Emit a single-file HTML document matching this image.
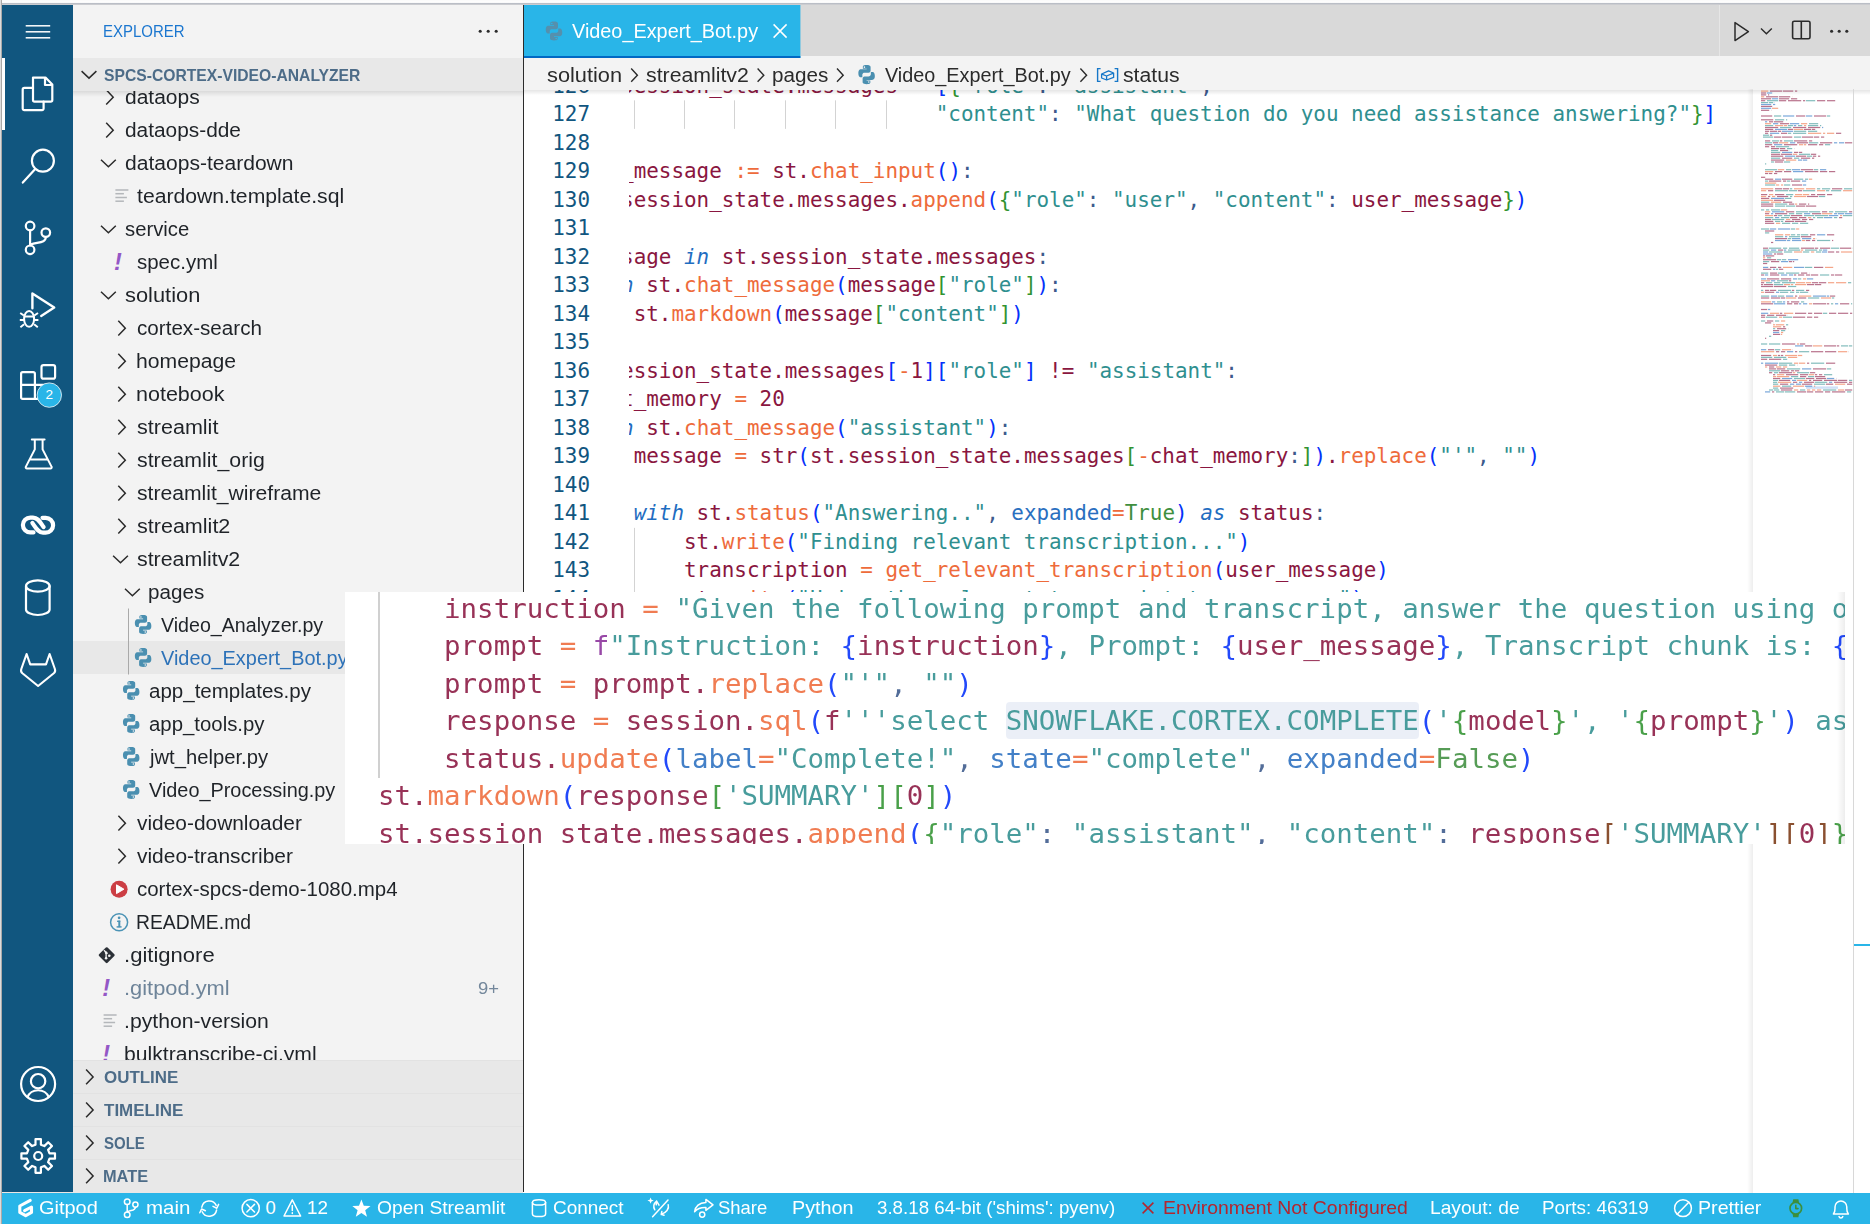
<!DOCTYPE html>
<html lang="en"><head><meta charset="utf-8"><title>Video_Expert_Bot.py - spcs-cortex-video-analyzer</title>
<style>
*{box-sizing:border-box;margin:0;padding:0}
html,body{width:1870px;height:1224px;overflow:hidden;background:#fff}
body{position:relative;font-family:"Liberation Sans", "DejaVu Sans", sans-serif;color:#1f2328}
.abs{position:absolute}
.t{position:absolute;white-space:pre;line-height:1;transform-origin:0 0}
#top{left:0;top:0;width:1870px;height:5px;background:linear-gradient(#fbfbfb 0,#fbfbfb 1px,#fdfdfd 1px,#fdfdfd 2px,#fff 2px,#f4f4f5 3px,#babec6 3px,#babec6 4px,#cbccd0 4px,#cbccd0 5px)}
#lb{left:0;top:0;width:2px;height:1224px;background:linear-gradient(90deg,#dcdcdc 0,#dcdcdc 1px,#aeaaa8 1px,#a8a8a8 2px)}
#act{left:2px;top:5px;width:71px;height:1187px;background:#11567f}
#side{left:73px;top:5px;width:450px;height:1188px;background:#f3f3f3}
#sb{left:523px;top:5px;width:1px;height:1187px;background:#2b2b2b}
#ed{left:524px;top:5px;width:1346px;height:1188px;background:#fff}
#status{left:2px;top:1192.8px;width:1868px;height:32px;background:#29b5e8}
svg{position:absolute;overflow:visible}
.code{position:absolute;font-family:"DejaVu Sans Mono", "Liberation Mono", monospace;font-size:20.92px;line-height:28.5px;height:28.5px;white-space:pre;color:#8a1640}
.ln{position:absolute;font-family:"DejaVu Sans Mono", "Liberation Mono", monospace;font-size:20.92px;line-height:28.5px;height:28.5px;color:#11567f;text-align:right;width:60px;white-space:pre}
.v{color:#8a1640}.fp{color:#8a2f9a}.f{color:#ee6b3b}.s{color:#2f8f8f}.k{color:#1f6dc1;font-style:italic}.o{color:#ee6b3b}
.p{color:#3c5a8c}.b1{color:#0431fa}.b2{color:#319331}.b3{color:#7b3814}.a{color:#2a6fc0}.c{color:#3f8f3f}.n{color:#8a1640}
.hl{background:#e9edf7;border-radius:4px;padding:2.6px 0}
</style></head>
<body>
<div class="abs" id="act"></div>
<div class="abs" id="side"></div>
<div class="abs" id="ed"></div>
<div class="abs" id="sb"></div>
<svg style="left:0;top:0" width="80" height="1224" viewBox="0 0 80 1224"><rect x="2" y="58" width="3" height="72" fill="#fff"/><path d="M25.7 25.8 H50.2" stroke="#fff" stroke-width="1.5"/><path d="M25.7 31.8 H50.2" stroke="#fff" stroke-width="1.5"/><path d="M25.7 37.8 H50.2" stroke="#fff" stroke-width="1.5"/><path d="M33 77.6 H45.5 L52.3 84.6 V100 a1.6 1.6 0 0 1 -1.6 1.6 H34.6 a1.6 1.6 0 0 1 -1.6 -1.6 Z M45 78 V85 H52" fill="none" stroke="#fff" stroke-width="2.2" stroke-linejoin="round" stroke-linecap="round"/><path d="M33 87.9 H24.3 a1.6 1.6 0 0 0 -1.6 1.6 V108.6 a1.6 1.6 0 0 0 1.6 1.6 H42 a1.6 1.6 0 0 0 1.6 -1.6 V101.6" fill="none" stroke="#fff" stroke-width="2.2" stroke-linejoin="round" stroke-linecap="round"/><circle cx="42.9" cy="160.7" r="11" fill="none" stroke="#fff" stroke-width="2.2" stroke-linejoin="round" stroke-linecap="round"/><path d="M35 169.3 L22.8 182.6" fill="none" stroke="#fff" stroke-width="2.2" stroke-linejoin="round" stroke-linecap="round"/><circle cx="30.1" cy="226" r="4.3" fill="none" stroke="#fff" stroke-width="2.2" stroke-linejoin="round" stroke-linecap="round"/><circle cx="30.1" cy="249.8" r="4.3" fill="none" stroke="#fff" stroke-width="2.2" stroke-linejoin="round" stroke-linecap="round"/><circle cx="45.8" cy="232.6" r="4.3" fill="none" stroke="#fff" stroke-width="2.2" stroke-linejoin="round" stroke-linecap="round"/><path d="M30.1 230.4 V245.4 M45.8 237 C45.8 243 38 242 30.6 244.6" fill="none" stroke="#fff" stroke-width="2.2" stroke-linejoin="round" stroke-linecap="round"/><path d="M32.4 308.2 V293.4 L54.2 307.6 L41.2 315.9" fill="none" stroke="#fff" stroke-width="2.4" stroke-linejoin="round" stroke-linecap="round"/><ellipse cx="29.1" cy="318.9" rx="5" ry="7.9" fill="none" stroke="#fff" stroke-width="2"/><path d="M24.3 316.5 H33.9 M20.2 312.9 L23.9 315.6 M38 312.9 L34.3 315.6 M19.8 320 H24 M34.2 320 H38.4 M20.4 327.2 L24.1 324.2 M37.8 327.2 L34.1 324.2" fill="none" stroke="#fff" stroke-width="1.9" stroke-linecap="butt"/><path d="M21.1 384.8 H34.9 V398.9 H22.7 a1.6 1.6 0 0 1 -1.6 -1.6 Z M21.1 384.8 V373.7 a1.6 1.6 0 0 1 1.6 -1.6 H33.3 a1.6 1.6 0 0 1 1.6 1.6 V384.8 M34.9 384.8 H47 V397.3 a1.6 1.6 0 0 1 -1.6 1.6 H34.9" fill="none" stroke="#fff" stroke-width="2.2" stroke-linejoin="round" stroke-linecap="round"/><rect x="41.5" y="365.1" width="13.6" height="13.6" rx="2" fill="none" stroke="#fff" stroke-width="2.2" stroke-linejoin="round" stroke-linecap="round"/><circle cx="49.3" cy="395.1" r="12.2" fill="#29b5e8" stroke="#e6f1f6" stroke-opacity=".85" stroke-width="1"/><path d="M31.8 439.4 H44.6 M34.8 439.8 V449.4 L25.9 466.6 a1.3 1.3 0 0 0 1.2 2 H50.3 a1.3 1.3 0 0 0 1.2 -2 L42.6 449.4 V439.8 M30 459.4 H47.4" fill="none" stroke="#fff" stroke-width="2" stroke-linejoin="round" stroke-linecap="round"/><path d="M33.5 532.4 H30.3 a7.4 7.4 0 0 1 0 -14.8 H33 C38 517.6 40 522 43.6 527 M42.5 517.8 H45.7 a7.4 7.4 0 0 1 0 14.8 H43 C38 532.6 36 528 32.4 523" fill="none" stroke="#fff" stroke-width="4.2" stroke-linecap="round" stroke-linejoin="round"/><ellipse cx="37.8" cy="586" rx="11.8" ry="5.6" fill="none" stroke="#fff" stroke-width="2.2" stroke-linejoin="round" stroke-linecap="round"/><path d="M26 586 V609.4 a11.8 5.6 0 0 0 23.6 0 V586" fill="none" stroke="#fff" stroke-width="2.2" stroke-linejoin="round" stroke-linecap="round"/><path d="M26.6 654 L30.2 664.4 H46 L49.6 654 L54.9 669 Q55.8 671.6 53.8 673.3 L38.1 686 L22.4 673.3 Q20.4 671.6 21.3 669 Z" fill="none" stroke="#fff" stroke-width="2.1" stroke-linejoin="round" stroke-linecap="round"/><circle cx="38.1" cy="1084" r="17" fill="none" stroke="#fff" stroke-width="2.2" stroke-linejoin="round" stroke-linecap="round"/><circle cx="38.1" cy="1081.2" r="7.2" fill="none" stroke="#fff" stroke-width="2.2" stroke-linejoin="round" stroke-linecap="round"/><path d="M27.6 1097 a11 9.6 0 0 1 21 0" fill="none" stroke="#fff" stroke-width="2.2" stroke-linejoin="round" stroke-linecap="round"/><path d="M35.5 1144.7 L35.5 1139.2 L40.9 1139.2 L40.9 1144.7 L44.3 1146.1 L48.2 1142.2 L52.0 1146.0 L48.1 1149.9 L49.5 1153.3 L55.0 1153.3 L55.0 1158.7 L49.5 1158.7 L48.1 1162.1 L52.0 1166.0 L48.2 1169.8 L44.3 1165.9 L40.9 1167.3 L40.9 1172.8 L35.5 1172.8 L35.5 1167.3 L32.1 1165.9 L28.2 1169.8 L24.4 1166.0 L28.3 1162.1 L26.9 1158.7 L21.4 1158.7 L21.4 1153.3 L26.9 1153.3 L28.3 1149.9 L24.4 1146.0 L28.2 1142.2 L32.1 1146.1 Z" fill="none" stroke="#fff" stroke-width="2.2" stroke-linejoin="round" stroke-linecap="round"/><circle cx="38.2" cy="1156" r="4" fill="none" stroke="#fff" stroke-width="2.2" stroke-linejoin="round" stroke-linecap="round"/></svg>
<span class="t" style="left:45.42px;top:388.39px;font-size:13.6px;color:#fff;transform:scaleX(1.0000);">2</span>
<div class="abs" style="left:73px;top:5px;width:450px;height:1188px;overflow:hidden"><div class="abs" style="left:-73px;top:-5px;width:600px;height:1224px">
<svg style="left:0;top:0" width="600" height="1224" viewBox="0 0 600 1224"><rect x="73" y="641" width="450" height="33" fill="#e8e8e8"/><rect x="128" y="608.5" width="1" height="66" fill="#a9a9a9"/><path d="M106.2 89.8 l7 7.4 l-7 7.4" fill="none" stroke="#2b2b2b" stroke-width="1.5" stroke-linejoin="miter"/><path d="M106.2 122.8 l7 7.4 l-7 7.4" fill="none" stroke="#2b2b2b" stroke-width="1.5" stroke-linejoin="miter"/><path d="M101 159.7 l7.4 7 l7.4 -7" fill="none" stroke="#2b2b2b" stroke-width="1.5" stroke-linejoin="miter"/><rect x="115.4" y="189.25" width="13" height="1.5" fill="#b4b7ba"/><rect x="115.4" y="192.95" width="8.5" height="1.5" fill="#b4b7ba"/><rect x="115.4" y="196.75" width="11.5" height="1.5" fill="#b4b7ba"/><rect x="115.4" y="200.45" width="8.5" height="1.5" fill="#b4b7ba"/><path d="M101 225.7 l7.4 7 l7.4 -7" fill="none" stroke="#2b2b2b" stroke-width="1.5" stroke-linejoin="miter"/><path d="M101 291.7 l7.4 7 l7.4 -7" fill="none" stroke="#2b2b2b" stroke-width="1.5" stroke-linejoin="miter"/><path d="M118.3 320.8 l7 7.4 l-7 7.4" fill="none" stroke="#2b2b2b" stroke-width="1.5" stroke-linejoin="miter"/><path d="M118.3 353.8 l7 7.4 l-7 7.4" fill="none" stroke="#2b2b2b" stroke-width="1.5" stroke-linejoin="miter"/><path d="M118.3 386.8 l7 7.4 l-7 7.4" fill="none" stroke="#2b2b2b" stroke-width="1.5" stroke-linejoin="miter"/><path d="M118.3 419.8 l7 7.4 l-7 7.4" fill="none" stroke="#2b2b2b" stroke-width="1.5" stroke-linejoin="miter"/><path d="M118.3 452.8 l7 7.4 l-7 7.4" fill="none" stroke="#2b2b2b" stroke-width="1.5" stroke-linejoin="miter"/><path d="M118.3 485.8 l7 7.4 l-7 7.4" fill="none" stroke="#2b2b2b" stroke-width="1.5" stroke-linejoin="miter"/><path d="M118.3 518.8 l7 7.4 l-7 7.4" fill="none" stroke="#2b2b2b" stroke-width="1.5" stroke-linejoin="miter"/><path d="M113.1 555.7 l7.4 7 l7.4 -7" fill="none" stroke="#2b2b2b" stroke-width="1.5" stroke-linejoin="miter"/><path d="M125 588.7 l7.4 7 l7.4 -7" fill="none" stroke="#2b2b2b" stroke-width="1.5" stroke-linejoin="miter"/><g transform="translate(132.8 614.2) scale(1.2875)" fill="#4a8fb0"><path d="M7.9 0.6 C4.9 0.6 5.1 1.9 5.1 1.9 V3.4 H8 V3.9 H3.7 C3.7 3.9 1.6 3.7 1.6 6.9 C1.6 10.1 3.4 10 3.4 10 H4.7 V8.4 C4.7 8.4 4.6 6.6 6.5 6.6 H9.4 C9.4 6.6 11.1 6.6 11.1 4.9 V2.3 C11.1 2.3 11.4 0.6 7.9 0.6 Z"/><path d="M7.9 0.6 C4.9 0.6 5.1 1.9 5.1 1.9 V3.4 H8 V3.9 H3.7 C3.7 3.9 1.6 3.7 1.6 6.9 C1.6 10.1 3.4 10 3.4 10 H4.7 V8.4 C4.7 8.4 4.6 6.6 6.5 6.6 H9.4 C9.4 6.6 11.1 6.6 11.1 4.9 V2.3 C11.1 2.3 11.4 0.6 7.9 0.6 Z" transform="rotate(180 8 8)"/><circle cx="6.3" cy="2.2" r="0.62" fill="#f3f3f3"/><circle cx="9.7" cy="13.8" r="0.62" fill="#f3f3f3"/></g><g transform="translate(132.8 647.2) scale(1.2875)" fill="#4a8fb0"><path d="M7.9 0.6 C4.9 0.6 5.1 1.9 5.1 1.9 V3.4 H8 V3.9 H3.7 C3.7 3.9 1.6 3.7 1.6 6.9 C1.6 10.1 3.4 10 3.4 10 H4.7 V8.4 C4.7 8.4 4.6 6.6 6.5 6.6 H9.4 C9.4 6.6 11.1 6.6 11.1 4.9 V2.3 C11.1 2.3 11.4 0.6 7.9 0.6 Z"/><path d="M7.9 0.6 C4.9 0.6 5.1 1.9 5.1 1.9 V3.4 H8 V3.9 H3.7 C3.7 3.9 1.6 3.7 1.6 6.9 C1.6 10.1 3.4 10 3.4 10 H4.7 V8.4 C4.7 8.4 4.6 6.6 6.5 6.6 H9.4 C9.4 6.6 11.1 6.6 11.1 4.9 V2.3 C11.1 2.3 11.4 0.6 7.9 0.6 Z" transform="rotate(180 8 8)"/><circle cx="6.3" cy="2.2" r="0.62" fill="#f3f3f3"/><circle cx="9.7" cy="13.8" r="0.62" fill="#f3f3f3"/></g><g transform="translate(120.9 680.2) scale(1.2875)" fill="#4a8fb0"><path d="M7.9 0.6 C4.9 0.6 5.1 1.9 5.1 1.9 V3.4 H8 V3.9 H3.7 C3.7 3.9 1.6 3.7 1.6 6.9 C1.6 10.1 3.4 10 3.4 10 H4.7 V8.4 C4.7 8.4 4.6 6.6 6.5 6.6 H9.4 C9.4 6.6 11.1 6.6 11.1 4.9 V2.3 C11.1 2.3 11.4 0.6 7.9 0.6 Z"/><path d="M7.9 0.6 C4.9 0.6 5.1 1.9 5.1 1.9 V3.4 H8 V3.9 H3.7 C3.7 3.9 1.6 3.7 1.6 6.9 C1.6 10.1 3.4 10 3.4 10 H4.7 V8.4 C4.7 8.4 4.6 6.6 6.5 6.6 H9.4 C9.4 6.6 11.1 6.6 11.1 4.9 V2.3 C11.1 2.3 11.4 0.6 7.9 0.6 Z" transform="rotate(180 8 8)"/><circle cx="6.3" cy="2.2" r="0.62" fill="#f3f3f3"/><circle cx="9.7" cy="13.8" r="0.62" fill="#f3f3f3"/></g><g transform="translate(120.9 713.2) scale(1.2875)" fill="#4a8fb0"><path d="M7.9 0.6 C4.9 0.6 5.1 1.9 5.1 1.9 V3.4 H8 V3.9 H3.7 C3.7 3.9 1.6 3.7 1.6 6.9 C1.6 10.1 3.4 10 3.4 10 H4.7 V8.4 C4.7 8.4 4.6 6.6 6.5 6.6 H9.4 C9.4 6.6 11.1 6.6 11.1 4.9 V2.3 C11.1 2.3 11.4 0.6 7.9 0.6 Z"/><path d="M7.9 0.6 C4.9 0.6 5.1 1.9 5.1 1.9 V3.4 H8 V3.9 H3.7 C3.7 3.9 1.6 3.7 1.6 6.9 C1.6 10.1 3.4 10 3.4 10 H4.7 V8.4 C4.7 8.4 4.6 6.6 6.5 6.6 H9.4 C9.4 6.6 11.1 6.6 11.1 4.9 V2.3 C11.1 2.3 11.4 0.6 7.9 0.6 Z" transform="rotate(180 8 8)"/><circle cx="6.3" cy="2.2" r="0.62" fill="#f3f3f3"/><circle cx="9.7" cy="13.8" r="0.62" fill="#f3f3f3"/></g><g transform="translate(120.9 746.2) scale(1.2875)" fill="#4a8fb0"><path d="M7.9 0.6 C4.9 0.6 5.1 1.9 5.1 1.9 V3.4 H8 V3.9 H3.7 C3.7 3.9 1.6 3.7 1.6 6.9 C1.6 10.1 3.4 10 3.4 10 H4.7 V8.4 C4.7 8.4 4.6 6.6 6.5 6.6 H9.4 C9.4 6.6 11.1 6.6 11.1 4.9 V2.3 C11.1 2.3 11.4 0.6 7.9 0.6 Z"/><path d="M7.9 0.6 C4.9 0.6 5.1 1.9 5.1 1.9 V3.4 H8 V3.9 H3.7 C3.7 3.9 1.6 3.7 1.6 6.9 C1.6 10.1 3.4 10 3.4 10 H4.7 V8.4 C4.7 8.4 4.6 6.6 6.5 6.6 H9.4 C9.4 6.6 11.1 6.6 11.1 4.9 V2.3 C11.1 2.3 11.4 0.6 7.9 0.6 Z" transform="rotate(180 8 8)"/><circle cx="6.3" cy="2.2" r="0.62" fill="#f3f3f3"/><circle cx="9.7" cy="13.8" r="0.62" fill="#f3f3f3"/></g><g transform="translate(120.9 779.2) scale(1.2875)" fill="#4a8fb0"><path d="M7.9 0.6 C4.9 0.6 5.1 1.9 5.1 1.9 V3.4 H8 V3.9 H3.7 C3.7 3.9 1.6 3.7 1.6 6.9 C1.6 10.1 3.4 10 3.4 10 H4.7 V8.4 C4.7 8.4 4.6 6.6 6.5 6.6 H9.4 C9.4 6.6 11.1 6.6 11.1 4.9 V2.3 C11.1 2.3 11.4 0.6 7.9 0.6 Z"/><path d="M7.9 0.6 C4.9 0.6 5.1 1.9 5.1 1.9 V3.4 H8 V3.9 H3.7 C3.7 3.9 1.6 3.7 1.6 6.9 C1.6 10.1 3.4 10 3.4 10 H4.7 V8.4 C4.7 8.4 4.6 6.6 6.5 6.6 H9.4 C9.4 6.6 11.1 6.6 11.1 4.9 V2.3 C11.1 2.3 11.4 0.6 7.9 0.6 Z" transform="rotate(180 8 8)"/><circle cx="6.3" cy="2.2" r="0.62" fill="#f3f3f3"/><circle cx="9.7" cy="13.8" r="0.62" fill="#f3f3f3"/></g><path d="M118.4 815.8 l7 7.4 l-7 7.4" fill="none" stroke="#2b2b2b" stroke-width="1.5" stroke-linejoin="miter"/><path d="M118.4 848.8 l7 7.4 l-7 7.4" fill="none" stroke="#2b2b2b" stroke-width="1.5" stroke-linejoin="miter"/><circle cx="119.1" cy="889.2" r="8.5" fill="#cc3e44"/><path d="M116.5 884.8 l7.4 4.4 l-7.4 4.4 Z" fill="#fff" stroke="#fff" stroke-width="1" stroke-linejoin="round"/><circle cx="119.1" cy="922.2" r="8.5" fill="none" stroke="#4b93b5" stroke-width="1.5"/><rect x="118.3" y="920.6" width="2" height="6.6" fill="#4b93b5"/><rect x="117.1" y="920.6" width="3.2" height="1.4" fill="#4b93b5"/><rect x="116.6" y="926.2" width="5" height="1.4" fill="#4b93b5"/><circle cx="119.1" cy="917.8" r="1.35" fill="#4b93b5"/><rect x="100.7" y="949.2" width="12" height="12" rx="1.2" transform="rotate(45 106.7 955.2)" fill="#2b3036"/><path d="M103.9 950.2 l3.6 3.6 M106.1 952.6 v5.4" stroke="#f3f3f3" stroke-width="1.3" fill="none"/><circle cx="106.1" cy="952.8" r="1.3" fill="#f3f3f3"/><circle cx="106.1" cy="958.2" r="1.3" fill="#f3f3f3"/><circle cx="109.3" cy="955.8" r="1.3" fill="#f3f3f3"/><rect x="103.6" y="1014.25" width="13" height="1.5" fill="#b4b7ba"/><rect x="103.6" y="1017.95" width="8.5" height="1.5" fill="#b4b7ba"/><rect x="103.6" y="1021.75" width="11.5" height="1.5" fill="#b4b7ba"/><rect x="103.6" y="1025.45" width="8.5" height="1.5" fill="#b4b7ba"/></svg>
<span class="t" style="left:124.59px;top:86.67px;font-size:20px;color:#1f2328;transform:scaleX(1.0496);">dataops</span><span class="t" style="left:124.59px;top:119.67px;font-size:20px;color:#1f2328;transform:scaleX(1.0426);">dataops-dde</span><span class="t" style="left:124.59px;top:152.67px;font-size:20px;color:#1f2328;transform:scaleX(1.0525);">dataops-teardown</span><span class="t" style="left:137.19px;top:185.67px;font-size:20px;color:#1f2328;transform:scaleX(1.0587);">teardown.template.sql</span><span class="t" style="left:124.65px;top:218.67px;font-size:20px;color:#1f2328;transform:scaleX(1.0131);">service</span><span class="t" style="left:136.75px;top:251.67px;font-size:20px;color:#1f2328;transform:scaleX(1.0234);">spec.yml</span><span class="t" style="left:113.97px;top:250.51px;font-size:23.5px;color:#9457c6;font-weight:bold;font-style:italic;transform:scaleX(1.0000);">!</span><span class="t" style="left:124.62px;top:284.67px;font-size:20px;color:#1f2328;transform:scaleX(1.0920);">solution</span><span class="t" style="left:136.69px;top:317.67px;font-size:20px;color:#1f2328;transform:scaleX(1.0315);">cortex-search</span><span class="t" style="left:136.06px;top:350.67px;font-size:20px;color:#1f2328;transform:scaleX(1.0593);">homepage</span><span class="t" style="left:136.06px;top:383.67px;font-size:20px;color:#1f2328;transform:scaleX(1.0757);">notebook</span><span class="t" style="left:136.72px;top:416.67px;font-size:20px;color:#1f2328;transform:scaleX(1.0770);">streamlit</span><span class="t" style="left:136.72px;top:449.67px;font-size:20px;color:#1f2328;transform:scaleX(1.0649);">streamlit_orig</span><span class="t" style="left:136.72px;top:482.67px;font-size:20px;color:#1f2328;transform:scaleX(1.0563);">streamlit_wireframe</span><span class="t" style="left:136.72px;top:515.67px;font-size:20px;color:#1f2328;transform:scaleX(1.0767);">streamlit2</span><span class="t" style="left:136.72px;top:548.67px;font-size:20px;color:#1f2328;transform:scaleX(1.0674);">streamlitv2</span><span class="t" style="left:148.06px;top:581.67px;font-size:20px;color:#1f2328;transform:scaleX(1.0314);">pages</span><span class="t" style="left:161.02px;top:614.67px;font-size:20px;color:#1f2328;transform:scaleX(0.9810);">Video_Analyzer.py</span><span class="t" style="left:161.02px;top:647.67px;font-size:20px;color:#2d72b8;transform:scaleX(0.9949);">Video_Expert_Bot.py</span><span class="t" style="left:148.59px;top:680.67px;font-size:20px;color:#1f2328;transform:scaleX(1.0259);">app_templates.py</span><span class="t" style="left:148.59px;top:713.67px;font-size:20px;color:#1f2328;transform:scaleX(1.0185);">app_tools.py</span><span class="t" style="left:149.92px;top:746.67px;font-size:20px;color:#1f2328;transform:scaleX(1.0115);">jwt_helper.py</span><span class="t" style="left:149.12px;top:779.67px;font-size:20px;color:#1f2328;transform:scaleX(0.9933);">Video_Processing.py</span><span class="t" style="left:137.36px;top:812.67px;font-size:20px;color:#1f2328;transform:scaleX(1.0444);">video-downloader</span><span class="t" style="left:137.36px;top:845.67px;font-size:20px;color:#1f2328;transform:scaleX(1.0469);">video-transcriber</span><span class="t" style="left:136.79px;top:878.67px;font-size:20px;color:#1f2328;transform:scaleX(1.0236);">cortex-spcs-demo-1080.mp4</span><span class="t" style="left:136.03px;top:911.67px;font-size:20px;color:#1f2328;transform:scaleX(0.9672);">README.md</span><span class="t" style="left:123.65px;top:944.67px;font-size:20px;color:#1f2328;transform:scaleX(1.1028);">.gitignore</span><span class="t" style="left:123.67px;top:977.67px;font-size:20px;color:#6e8499;transform:scaleX(1.0920);">.gitpod.yml</span><span class="t" style="left:102.17px;top:976.51px;font-size:23.5px;color:#9457c6;font-weight:bold;font-style:italic;transform:scaleX(1.0000);">!</span><span class="t" style="left:123.70px;top:1010.67px;font-size:20px;color:#1f2328;transform:scaleX(1.0597);">.python-version</span><span class="t" style="left:124.32px;top:1043.67px;font-size:20px;color:#1f2328;transform:scaleX(1.0570);">bulktranscribe-ci.yml</span><span class="t" style="left:102.17px;top:1042.51px;font-size:23.5px;color:#9457c6;font-weight:bold;font-style:italic;transform:scaleX(1.0000);">!</span><span class="t" style="left:478.09px;top:979.61px;font-size:17px;color:#73879b;transform:scaleX(1.0829);">9+</span>
<div class="abs" style="left:73px;top:91px;width:450px;height:6px;background:linear-gradient(rgba(0,0,0,.10),rgba(0,0,0,0))"></div>
<svg style="left:0;top:0" width="600" height="1224" viewBox="0 0 600 1224"><rect x="73" y="58" width="450" height="33" fill="#e8e8e8"/><rect x="73" y="5" width="450" height="53" fill="#f3f3f3"/><path d="M81.6 71.1 l7.4 7 l7.4 -7" fill="none" stroke="#2b2b2b" stroke-width="1.5" stroke-linejoin="miter"/><circle cx="480.2" cy="31.2" r="1.55" fill="#2b2b2b"/><circle cx="488.2" cy="31.2" r="1.55" fill="#2b2b2b"/><circle cx="496.2" cy="31.2" r="1.55" fill="#2b2b2b"/><rect x="73" y="1060" width="450" height="133" fill="#e8e8e8"/><rect x="73" y="1060" width="450" height="1" fill="#e2e2e2"/><rect x="73" y="1093" width="450" height="1" fill="#e2e2e2"/><rect x="73" y="1126" width="450" height="1" fill="#e2e2e2"/><rect x="73" y="1159" width="450" height="1" fill="#e2e2e2"/><path d="M86.1 1069.5 l7 7.4 l-7 7.4" fill="none" stroke="#2b2b2b" stroke-width="1.5" stroke-linejoin="miter"/><path d="M86.1 1102.5 l7 7.4 l-7 7.4" fill="none" stroke="#2b2b2b" stroke-width="1.5" stroke-linejoin="miter"/><path d="M86.1 1135.5 l7 7.4 l-7 7.4" fill="none" stroke="#2b2b2b" stroke-width="1.5" stroke-linejoin="miter"/><path d="M86.1 1168.5 l7 7.4 l-7 7.4" fill="none" stroke="#2b2b2b" stroke-width="1.5" stroke-linejoin="miter"/></svg>
<span class="t" style="left:103.28px;top:23.23px;font-size:16.5px;color:#1a76cf;transform:scaleX(0.9084);">EXPLORER</span>
<span class="t" style="left:103.81px;top:66.83px;font-size:16.5px;color:#4d6c88;font-weight:bold;transform:scaleX(0.9502);">SPCS-CORTEX-VIDEO-ANALYZER</span>
<span class="t" style="left:103.81px;top:1069.03px;font-size:16.5px;color:#4d6c88;font-weight:bold;transform:scaleX(1.0262);">OUTLINE</span>
<span class="t" style="left:104.31px;top:1102.03px;font-size:16.5px;color:#4d6c88;font-weight:bold;transform:scaleX(1.0296);">TIMELINE</span>
<span class="t" style="left:103.85px;top:1135.03px;font-size:16.5px;color:#4d6c88;font-weight:bold;transform:scaleX(0.9088);">SOLE</span>
<span class="t" style="left:103.40px;top:1168.03px;font-size:16.5px;color:#4d6c88;font-weight:bold;transform:scaleX(0.9898);">MATE</span>
</div></div>
<svg style="left:0;top:0" width="1870" height="100" viewBox="0 0 1870 100"><rect x="524" y="5" width="1346" height="51" fill="#d9d9d9"/><rect x="524" y="56" width="1346" height="34" fill="#f3f3f3"/><rect x="524" y="5" width="276.4" height="53" fill="#29b5e8"/><rect x="524" y="56" width="276.4" height="2" fill="#0068c4"/><rect x="1719" y="5" width="1" height="51" fill="#e6e6e6"/><g transform="translate(543.7 20.7) scale(1.2875)" fill="#5590ad"><path d="M7.9 0.6 C4.9 0.6 5.1 1.9 5.1 1.9 V3.4 H8 V3.9 H3.7 C3.7 3.9 1.6 3.7 1.6 6.9 C1.6 10.1 3.4 10 3.4 10 H4.7 V8.4 C4.7 8.4 4.6 6.6 6.5 6.6 H9.4 C9.4 6.6 11.1 6.6 11.1 4.9 V2.3 C11.1 2.3 11.4 0.6 7.9 0.6 Z"/><path d="M7.9 0.6 C4.9 0.6 5.1 1.9 5.1 1.9 V3.4 H8 V3.9 H3.7 C3.7 3.9 1.6 3.7 1.6 6.9 C1.6 10.1 3.4 10 3.4 10 H4.7 V8.4 C4.7 8.4 4.6 6.6 6.5 6.6 H9.4 C9.4 6.6 11.1 6.6 11.1 4.9 V2.3 C11.1 2.3 11.4 0.6 7.9 0.6 Z" transform="rotate(180 8 8)"/><circle cx="6.3" cy="2.2" r="0.62" fill="#29b5e8"/><circle cx="9.7" cy="13.8" r="0.62" fill="#29b5e8"/></g><path d="M773.6 24.4 L786.6 37.6 M786.6 24.4 L773.6 37.6" stroke="#fff" stroke-width="1.5" fill="none"/><path d="M1735 22.6 V40.6 L1748.4 31.6 Z" fill="none" stroke="#2b2b2b" stroke-width="1.5" stroke-linejoin="round"/><path d="M1761 28.6 l5.4 5.2 l5.4 -5.2" fill="none" stroke="#2b2b2b" stroke-width="1.4"/><rect x="1792.6" y="21.2" width="17.4" height="17.6" rx="1.6" fill="none" stroke="#2b2b2b" stroke-width="1.6"/><path d="M1801.3 21.2 V38.8" stroke="#2b2b2b" stroke-width="1.6"/><circle cx="1831.6" cy="31.2" r="1.55" fill="#2b2b2b"/><circle cx="1839.2" cy="31.2" r="1.55" fill="#2b2b2b"/><circle cx="1846.8" cy="31.2" r="1.55" fill="#2b2b2b"/><path d="M631.2 68.6 l6.2 6.6 l-6.2 6.6" fill="none" stroke="#2b2b2b" stroke-width="1.4"/><path d="M757.6 68.6 l6.2 6.6 l-6.2 6.6" fill="none" stroke="#2b2b2b" stroke-width="1.4"/><path d="M837 68.6 l6.2 6.6 l-6.2 6.6" fill="none" stroke="#2b2b2b" stroke-width="1.4"/><path d="M1080.4 68.6 l6.2 6.6 l-6.2 6.6" fill="none" stroke="#2b2b2b" stroke-width="1.4"/><g transform="translate(856.3 64.3) scale(1.2875)" fill="#4a8fb0"><path d="M7.9 0.6 C4.9 0.6 5.1 1.9 5.1 1.9 V3.4 H8 V3.9 H3.7 C3.7 3.9 1.6 3.7 1.6 6.9 C1.6 10.1 3.4 10 3.4 10 H4.7 V8.4 C4.7 8.4 4.6 6.6 6.5 6.6 H9.4 C9.4 6.6 11.1 6.6 11.1 4.9 V2.3 C11.1 2.3 11.4 0.6 7.9 0.6 Z"/><path d="M7.9 0.6 C4.9 0.6 5.1 1.9 5.1 1.9 V3.4 H8 V3.9 H3.7 C3.7 3.9 1.6 3.7 1.6 6.9 C1.6 10.1 3.4 10 3.4 10 H4.7 V8.4 C4.7 8.4 4.6 6.6 6.5 6.6 H9.4 C9.4 6.6 11.1 6.6 11.1 4.9 V2.3 C11.1 2.3 11.4 0.6 7.9 0.6 Z" transform="rotate(180 8 8)"/><circle cx="6.3" cy="2.2" r="0.62" fill="#f3f3f3"/><circle cx="9.7" cy="13.8" r="0.62" fill="#f3f3f3"/></g><path d="M1100.6 68.6 H1097.6 V81.4 H1100.6 M1114.6 68.6 H1117.6 V81.4 H1114.6" fill="none" stroke="#1677c8" stroke-width="1.4"/><path d="M1101.6 74 L1108.6 70.8 L1113.6 73 V77.4 L1106.6 80 L1101.6 78 Z M1101.8 74.2 L1106.6 76 L1113.4 73.2 M1106.6 76 V79.8" fill="none" stroke="#1677c8" stroke-width="1.3" stroke-linejoin="round"/></svg>
<span class="t" style="left:572.22px;top:21.27px;font-size:20px;color:#fff;transform:scaleX(0.9922);">Video_Expert_Bot.py</span>
<span class="t" style="left:547.42px;top:65.27px;font-size:20px;color:#2b2b2b;transform:scaleX(1.0886);">solution</span>
<span class="t" style="left:645.92px;top:65.27px;font-size:20px;color:#2b2b2b;transform:scaleX(1.0634);">streamlitv2</span>
<span class="t" style="left:771.86px;top:65.27px;font-size:20px;color:#2b2b2b;transform:scaleX(1.0320);">pages</span>
<span class="t" style="left:885.22px;top:65.27px;font-size:20px;color:#2b2b2b;transform:scaleX(0.9904);">Video_Expert_Bot.py</span>
<span class="t" style="left:1123.22px;top:65.27px;font-size:20px;color:#2b2b2b;transform:scaleX(1.0595);">status</span>
<div class="abs" style="left:524px;top:90px;width:1346px;height:502px;overflow:hidden"><div class="abs" style="left:-524px;top:-90px;width:1870px;height:700px"><div class="abs" style="left:629px;top:0;width:1241px;height:700px;overflow:hidden"><div class="abs" style="left:-629px;top:0;width:1870px;height:700px"><div class="code" style="left:532.98px;top:71.85px">    <span class="v">st.session_state.messages</span><span class="o"> = </span><span class="b1">[</span><span class="b2">{</span><span class="s">"role"</span><span class="p">: </span><span class="s">"assistant"</span><span class="p">,</span></div><div class="code" style="left:532.98px;top:100.35px">                                <span class="s">"content"</span><span class="p">: </span><span class="s">"What question do you need assistance answering?"</span><span class="b2">}</span><span class="b1">]</span></div><div class="code" style="left:532.98px;top:157.35px"><span class="k">if</span><span class="v"> user_message </span><span class="o">:=</span><span class="v"> st.</span><span class="f">chat_input</span><span class="b1">()</span><span class="p">:</span></div><div class="code" style="left:532.98px;top:185.85px">    <span class="v">st.session_state.messages.</span><span class="f">append</span><span class="b1">(</span><span class="b2">{</span><span class="s">"role"</span><span class="p">: </span><span class="s">"user"</span><span class="p">, </span><span class="s">"content"</span><span class="p">: </span><span class="v">user_message</span><span class="b2">}</span><span class="b1">)</span></div><div class="code" style="left:532.98px;top:242.85px"><span class="k">for</span><span class="v"> message </span><span class="k">in</span><span class="v"> st.session_state.messages</span><span class="p">:</span></div><div class="code" style="left:532.98px;top:271.35px">    <span class="k">with</span><span class="v"> st.</span><span class="f">chat_message</span><span class="b1">(</span><span class="v">message</span><span class="b2">[</span><span class="s">"role"</span><span class="b2">]</span><span class="b1">)</span><span class="p">:</span></div><div class="code" style="left:532.98px;top:299.85px">        <span class="v">st.</span><span class="f">markdown</span><span class="b1">(</span><span class="v">message</span><span class="b2">[</span><span class="s">"content"</span><span class="b2">]</span><span class="b1">)</span></div><div class="code" style="left:532.98px;top:356.85px"><span class="k">if</span><span class="v"> st.session_state.messages</span><span class="b1">[</span><span class="o">-</span><span class="n">1</span><span class="b1">]</span><span class="b1">[</span><span class="s">"role"</span><span class="b1">]</span><span class="v"> != </span><span class="s">"assistant"</span><span class="p">:</span></div><div class="code" style="left:532.98px;top:385.35px">    <span class="v">chat_memory </span><span class="o">=</span><span class="v"> 20</span></div><div class="code" style="left:532.98px;top:413.85px">    <span class="k">with</span><span class="v"> st.</span><span class="f">chat_message</span><span class="b1">(</span><span class="s">"assistant"</span><span class="b1">)</span><span class="p">:</span></div><div class="code" style="left:532.98px;top:442.35px">        <span class="v">message </span><span class="o">=</span><span class="v"> str</span><span class="b1">(</span><span class="v">st.session_state.messages</span><span class="b2">[</span><span class="o">-</span><span class="v">chat_memory</span><span class="p">:</span><span class="b2">]</span><span class="b1">)</span><span class="v">.</span><span class="f">replace</span><span class="b1">(</span><span class="s">"'"</span><span class="p">, </span><span class="s">""</span><span class="b1">)</span></div><div class="code" style="left:532.98px;top:499.35px">        <span class="k">with</span><span class="v"> st.</span><span class="f">status</span><span class="b1">(</span><span class="s">"Answering.."</span><span class="p">, </span><span class="a">expanded</span><span class="o">=</span><span class="c">True</span><span class="b1">)</span> <span class="k">as</span><span class="v"> status</span><span class="p">:</span></div><div class="code" style="left:532.98px;top:527.85px">            <span class="v">st.</span><span class="f">write</span><span class="b1">(</span><span class="s">"Finding relevant transcription..."</span><span class="b1">)</span></div><div class="code" style="left:532.98px;top:556.35px">            <span class="v">transcription </span><span class="o">=</span> <span class="f">get_relevant_transcription</span><span class="b1">(</span><span class="v">user_message</span><span class="b1">)</span></div><div class="code" style="left:532.98px;top:584.85px">            <span class="v">st.</span><span class="f">write</span><span class="b1">(</span><span class="s">"Using the relevant transcript to answer..."</span><span class="b1">)</span></div><svg style="left:0;top:0" width="1870" height="700" viewBox="0 0 1870 700"><rect x="634" y="100.35" width="1" height="28.5" fill="#d3d3d3"/><rect x="684" y="100.35" width="1" height="28.5" fill="#d3d3d3"/><rect x="734" y="100.35" width="1" height="28.5" fill="#d3d3d3"/><rect x="785" y="100.35" width="1" height="28.5" fill="#d3d3d3"/><rect x="835" y="100.35" width="1" height="28.5" fill="#d3d3d3"/><rect x="886" y="100.35" width="1" height="28.5" fill="#d3d3d3"/><rect x="634" y="527.85" width="1" height="85.5" fill="#d3d3d3"/></svg></div></div><div class="ln" style="left:530px;top:71.85px">126</div><div class="ln" style="left:530px;top:100.35px">127</div><div class="ln" style="left:530px;top:128.85px">128</div><div class="ln" style="left:530px;top:157.35px">129</div><div class="ln" style="left:530px;top:185.85px">130</div><div class="ln" style="left:530px;top:214.35px">131</div><div class="ln" style="left:530px;top:242.85px">132</div><div class="ln" style="left:530px;top:271.35px">133</div><div class="ln" style="left:530px;top:299.85px">134</div><div class="ln" style="left:530px;top:328.35px">135</div><div class="ln" style="left:530px;top:356.85px">136</div><div class="ln" style="left:530px;top:385.35px">137</div><div class="ln" style="left:530px;top:413.85px">138</div><div class="ln" style="left:530px;top:442.35px">139</div><div class="ln" style="left:530px;top:470.85px">140</div><div class="ln" style="left:530px;top:499.35px">141</div><div class="ln" style="left:530px;top:527.85px">142</div><div class="ln" style="left:530px;top:556.35px">143</div><div class="ln" style="left:530px;top:584.85px">144</div></div></div>
<div class="abs" style="left:524px;top:90px;width:1346px;height:5px;background:linear-gradient(rgba(0,0,0,.10),rgba(0,0,0,0))"></div>
<svg style="left:0;top:0" width="1870" height="420" viewBox="0 0 1870 420"><rect x="1806" y="386.4" width="32" height="2.4" fill="#cfe0f7"/><rect x="1761.0" y="90.5" width="7.2" height="1.2" fill="#ee6b3b" opacity=".6"/><rect x="1770.0" y="90.5" width="12.2" height="1.2" fill="#8a1640" opacity=".6"/><rect x="1783.0" y="90.5" width="10.2" height="1.2" fill="#8a1640" opacity=".6"/><rect x="1795.0" y="90.5" width="2.2" height="1.2" fill="#8a1640" opacity=".6"/><rect x="1761.0" y="92.4" width="5.2" height="1.2" fill="#8a1640" opacity=".6"/><rect x="1767.0" y="92.4" width="5.2" height="1.2" fill="#1f6dc1" opacity=".6"/><rect x="1761.0" y="94.3" width="5.2" height="1.2" fill="#8a1640" opacity=".6"/><rect x="1768.0" y="94.3" width="1.2" height="1.2" fill="#8a1640" opacity=".6"/><rect x="1761.0" y="96.2" width="3.2" height="1.2" fill="#ee6b3b" opacity=".6"/><rect x="1766.0" y="96.2" width="12.2" height="1.2" fill="#8a1640" opacity=".6"/><rect x="1779.0" y="96.2" width="11.2" height="1.2" fill="#8a1640" opacity=".6"/><rect x="1792.0" y="96.2" width="0.2" height="1.2" fill="#ee6b3b" opacity=".6"/><rect x="1761.0" y="98.2" width="10.2" height="1.2" fill="#8a1640" opacity=".6"/><rect x="1772.0" y="98.2" width="6.2" height="1.2" fill="#1f6dc1" opacity=".6"/><rect x="1779.0" y="98.2" width="10.2" height="1.2" fill="#8a1640" opacity=".6"/><rect x="1791.0" y="98.2" width="6.2" height="1.2" fill="#8a1640" opacity=".6"/><rect x="1761.0" y="100.1" width="4.2" height="1.2" fill="#8a1640" opacity=".6"/><rect x="1767.0" y="100.1" width="11.2" height="1.2" fill="#2f8f8f" opacity=".6"/><rect x="1779.0" y="100.1" width="7.2" height="1.2" fill="#8a1640" opacity=".6"/><rect x="1788.0" y="100.1" width="13.2" height="1.2" fill="#8a1640" opacity=".6"/><rect x="1803.0" y="100.1" width="2.2" height="1.2" fill="#8a1640" opacity=".6"/><rect x="1806.0" y="100.1" width="9.2" height="1.2" fill="#2f8f8f" opacity=".6"/><rect x="1817.0" y="100.1" width="8.2" height="1.2" fill="#8a1640" opacity=".6"/><rect x="1827.0" y="100.1" width="8.2" height="1.2" fill="#8a1640" opacity=".6"/><rect x="1761.0" y="102.0" width="7.2" height="1.2" fill="#2f8f8f" opacity=".6"/><rect x="1769.0" y="102.0" width="4.2" height="1.2" fill="#2f8f8f" opacity=".6"/><rect x="1774.0" y="102.0" width="0.2" height="1.2" fill="#8a1640" opacity=".6"/><rect x="1761.0" y="103.9" width="10.2" height="1.2" fill="#1f6dc1" opacity=".6"/><rect x="1773.0" y="103.9" width="2.2" height="1.2" fill="#1f6dc1" opacity=".6"/><rect x="1761.0" y="105.8" width="11.2" height="1.2" fill="#8a1640" opacity=".6"/><rect x="1761.0" y="107.7" width="10.2" height="1.2" fill="#1f6dc1" opacity=".6"/><rect x="1772.0" y="107.7" width="6.2" height="1.2" fill="#ee6b3b" opacity=".6"/><rect x="1761.0" y="109.7" width="8.2" height="1.2" fill="#8a1640" opacity=".6"/><rect x="1771.0" y="109.7" width="0.2" height="1.2" fill="#8a1640" opacity=".6"/><rect x="1761.0" y="115.4" width="11.2" height="1.2" fill="#8a1640" opacity=".6"/><rect x="1774.0" y="115.4" width="7.2" height="1.2" fill="#2f8f8f" opacity=".6"/><rect x="1783.0" y="115.4" width="11.2" height="1.2" fill="#1f6dc1" opacity=".6"/><rect x="1796.0" y="115.4" width="9.2" height="1.2" fill="#8a1640" opacity=".6"/><rect x="1806.0" y="115.4" width="6.2" height="1.2" fill="#1f6dc1" opacity=".6"/><rect x="1814.0" y="115.4" width="12.2" height="1.2" fill="#8a1640" opacity=".6"/><rect x="1827.0" y="115.4" width="3.2" height="1.2" fill="#2f8f8f" opacity=".6"/><rect x="1761.0" y="119.2" width="12.2" height="1.2" fill="#8a1640" opacity=".6"/><rect x="1775.0" y="119.2" width="9.2" height="1.2" fill="#2f8f8f" opacity=".6"/><rect x="1786.0" y="119.2" width="1.2" height="1.2" fill="#2f8f8f" opacity=".6"/><rect x="1765.0" y="121.2" width="2.2" height="1.2" fill="#1f6dc1" opacity=".6"/><rect x="1769.0" y="121.2" width="4.2" height="1.2" fill="#8a1640" opacity=".6"/><rect x="1774.0" y="121.2" width="9.2" height="1.2" fill="#8a1640" opacity=".6"/><rect x="1765.0" y="123.1" width="6.2" height="1.2" fill="#ee6b3b" opacity=".6"/><rect x="1773.0" y="123.1" width="5.2" height="1.2" fill="#1f6dc1" opacity=".6"/><rect x="1780.0" y="123.1" width="9.2" height="1.2" fill="#8a1640" opacity=".6"/><rect x="1790.0" y="123.1" width="9.2" height="1.2" fill="#1f6dc1" opacity=".6"/><rect x="1801.0" y="123.1" width="6.2" height="1.2" fill="#ee6b3b" opacity=".6"/><rect x="1809.0" y="123.1" width="9.2" height="1.2" fill="#2f8f8f" opacity=".6"/><rect x="1765.0" y="125.0" width="8.2" height="1.2" fill="#2f8f8f" opacity=".6"/><rect x="1775.0" y="125.0" width="8.2" height="1.2" fill="#ee6b3b" opacity=".6"/><rect x="1784.0" y="125.0" width="3.2" height="1.2" fill="#ee6b3b" opacity=".6"/><rect x="1788.0" y="125.0" width="5.2" height="1.2" fill="#2f8f8f" opacity=".6"/><rect x="1794.0" y="125.0" width="2.2" height="1.2" fill="#1f6dc1" opacity=".6"/><rect x="1798.0" y="125.0" width="4.2" height="1.2" fill="#2f8f8f" opacity=".6"/><rect x="1804.0" y="125.0" width="2.2" height="1.2" fill="#ee6b3b" opacity=".6"/><rect x="1808.0" y="125.0" width="10.2" height="1.2" fill="#2f8f8f" opacity=".6"/><rect x="1820.0" y="125.0" width="1.2" height="1.2" fill="#2f8f8f" opacity=".6"/><rect x="1765.0" y="126.9" width="13.2" height="1.2" fill="#8a1640" opacity=".6"/><rect x="1780.0" y="126.9" width="11.2" height="1.2" fill="#2f8f8f" opacity=".6"/><rect x="1793.0" y="126.9" width="13.2" height="1.2" fill="#8a1640" opacity=".6"/><rect x="1808.0" y="126.9" width="12.2" height="1.2" fill="#8a1640" opacity=".6"/><rect x="1822.0" y="126.9" width="1.2" height="1.2" fill="#1f6dc1" opacity=".6"/><rect x="1765.0" y="128.8" width="8.2" height="1.2" fill="#8a1640" opacity=".6"/><rect x="1775.0" y="128.8" width="12.2" height="1.2" fill="#1f6dc1" opacity=".6"/><rect x="1788.0" y="128.8" width="5.2" height="1.2" fill="#8a1640" opacity=".6"/><rect x="1794.0" y="128.8" width="9.2" height="1.2" fill="#ee6b3b" opacity=".6"/><rect x="1804.0" y="128.8" width="7.2" height="1.2" fill="#8a1640" opacity=".6"/><rect x="1812.0" y="128.8" width="3.2" height="1.2" fill="#8a1640" opacity=".6"/><rect x="1765.0" y="130.7" width="4.2" height="1.2" fill="#8a1640" opacity=".6"/><rect x="1770.0" y="130.7" width="7.2" height="1.2" fill="#8a1640" opacity=".6"/><rect x="1778.0" y="130.7" width="3.2" height="1.2" fill="#8a1640" opacity=".6"/><rect x="1782.0" y="130.7" width="11.2" height="1.2" fill="#1f6dc1" opacity=".6"/><rect x="1794.0" y="130.7" width="12.2" height="1.2" fill="#2f8f8f" opacity=".6"/><rect x="1808.0" y="130.7" width="9.2" height="1.2" fill="#2f8f8f" opacity=".6"/><rect x="1765.0" y="132.7" width="3.2" height="1.2" fill="#8a1640" opacity=".6"/><rect x="1770.0" y="132.7" width="9.2" height="1.2" fill="#1f6dc1" opacity=".6"/><rect x="1781.0" y="132.7" width="6.2" height="1.2" fill="#8a1640" opacity=".6"/><rect x="1788.0" y="132.7" width="3.2" height="1.2" fill="#2f8f8f" opacity=".6"/><rect x="1793.0" y="132.7" width="13.2" height="1.2" fill="#2f8f8f" opacity=".6"/><rect x="1808.0" y="132.7" width="13.2" height="1.2" fill="#ee6b3b" opacity=".6"/><rect x="1823.0" y="132.7" width="2.2" height="1.2" fill="#ee6b3b" opacity=".6"/><rect x="1827.0" y="132.7" width="7.2" height="1.2" fill="#ee6b3b" opacity=".6"/><rect x="1836.0" y="132.7" width="5.2" height="1.2" fill="#8a1640" opacity=".6"/><rect x="1763.0" y="134.6" width="6.2" height="1.2" fill="#2f8f8f" opacity=".6"/><rect x="1770.0" y="134.6" width="2.2" height="1.2" fill="#8a1640" opacity=".6"/><rect x="1763.0" y="136.5" width="10.2" height="1.2" fill="#2f8f8f" opacity=".6"/><rect x="1774.0" y="136.5" width="7.2" height="1.2" fill="#8a1640" opacity=".6"/><rect x="1782.0" y="136.5" width="10.2" height="1.2" fill="#8a1640" opacity=".6"/><rect x="1794.0" y="136.5" width="7.2" height="1.2" fill="#2f8f8f" opacity=".6"/><rect x="1802.0" y="136.5" width="11.2" height="1.2" fill="#8a1640" opacity=".6"/><rect x="1814.0" y="136.5" width="5.2" height="1.2" fill="#8a1640" opacity=".6"/><rect x="1821.0" y="136.5" width="3.2" height="1.2" fill="#8a1640" opacity=".6"/><rect x="1765.0" y="140.3" width="5.2" height="1.2" fill="#8a1640" opacity=".6"/><rect x="1772.0" y="140.3" width="7.2" height="1.2" fill="#2f8f8f" opacity=".6"/><rect x="1780.0" y="140.3" width="2.2" height="1.2" fill="#8a1640" opacity=".6"/><rect x="1784.0" y="140.3" width="9.2" height="1.2" fill="#2f8f8f" opacity=".6"/><rect x="1794.0" y="140.3" width="13.2" height="1.2" fill="#8a1640" opacity=".6"/><rect x="1809.0" y="140.3" width="3.2" height="1.2" fill="#8a1640" opacity=".6"/><rect x="1765.0" y="142.2" width="7.2" height="1.2" fill="#2f8f8f" opacity=".6"/><rect x="1773.0" y="142.2" width="5.2" height="1.2" fill="#8a1640" opacity=".6"/><rect x="1779.0" y="142.2" width="9.2" height="1.2" fill="#ee6b3b" opacity=".6"/><rect x="1790.0" y="142.2" width="5.2" height="1.2" fill="#1f6dc1" opacity=".6"/><rect x="1797.0" y="142.2" width="11.2" height="1.2" fill="#8a1640" opacity=".6"/><rect x="1809.0" y="142.2" width="9.2" height="1.2" fill="#2f8f8f" opacity=".6"/><rect x="1820.0" y="142.2" width="12.2" height="1.2" fill="#8a1640" opacity=".6"/><rect x="1834.0" y="142.2" width="3.2" height="1.2" fill="#1f6dc1" opacity=".6"/><rect x="1839.0" y="142.2" width="5.2" height="1.2" fill="#1f6dc1" opacity=".6"/><rect x="1845.0" y="142.2" width="7.2" height="1.2" fill="#8a1640" opacity=".6"/><rect x="1765.0" y="144.1" width="7.2" height="1.2" fill="#8a1640" opacity=".6"/><rect x="1774.0" y="144.1" width="8.2" height="1.2" fill="#1f6dc1" opacity=".6"/><rect x="1784.0" y="144.1" width="13.2" height="1.2" fill="#8a1640" opacity=".6"/><rect x="1799.0" y="144.1" width="4.2" height="1.2" fill="#ee6b3b" opacity=".6"/><rect x="1804.0" y="144.1" width="2.2" height="1.2" fill="#ee6b3b" opacity=".6"/><rect x="1808.0" y="144.1" width="9.2" height="1.2" fill="#8a1640" opacity=".6"/><rect x="1819.0" y="144.1" width="4.2" height="1.2" fill="#8a1640" opacity=".6"/><rect x="1825.0" y="144.1" width="5.2" height="1.2" fill="#2f8f8f" opacity=".6"/><rect x="1765.0" y="146.1" width="4.2" height="1.2" fill="#8a1640" opacity=".6"/><rect x="1771.0" y="146.1" width="4.2" height="1.2" fill="#8a1640" opacity=".6"/><rect x="1776.0" y="146.1" width="13.2" height="1.2" fill="#2f8f8f" opacity=".6"/><rect x="1790.0" y="146.1" width="0.2" height="1.2" fill="#2f8f8f" opacity=".6"/><rect x="1771.0" y="148.0" width="8.2" height="1.2" fill="#8a1640" opacity=".6"/><rect x="1780.0" y="148.0" width="5.2" height="1.2" fill="#8a1640" opacity=".6"/><rect x="1787.0" y="148.0" width="5.2" height="1.2" fill="#2f8f8f" opacity=".6"/><rect x="1794.0" y="148.0" width="0.2" height="1.2" fill="#8a1640" opacity=".6"/><rect x="1771.0" y="149.9" width="7.2" height="1.2" fill="#2f8f8f" opacity=".6"/><rect x="1780.0" y="149.9" width="8.2" height="1.2" fill="#8a1640" opacity=".6"/><rect x="1789.0" y="149.9" width="0.2" height="1.2" fill="#2f8f8f" opacity=".6"/><rect x="1771.0" y="151.8" width="9.2" height="1.2" fill="#2f8f8f" opacity=".6"/><rect x="1782.0" y="151.8" width="10.2" height="1.2" fill="#1f6dc1" opacity=".6"/><rect x="1794.0" y="151.8" width="4.2" height="1.2" fill="#8a1640" opacity=".6"/><rect x="1799.0" y="151.8" width="3.2" height="1.2" fill="#8a1640" opacity=".6"/><rect x="1771.0" y="153.7" width="9.2" height="1.2" fill="#8a1640" opacity=".6"/><rect x="1781.0" y="153.7" width="11.2" height="1.2" fill="#8a1640" opacity=".6"/><rect x="1793.0" y="153.7" width="4.2" height="1.2" fill="#ee6b3b" opacity=".6"/><rect x="1799.0" y="153.7" width="11.2" height="1.2" fill="#2f8f8f" opacity=".6"/><rect x="1811.0" y="153.7" width="5.2" height="1.2" fill="#8a1640" opacity=".6"/><rect x="1771.0" y="155.6" width="12.2" height="1.2" fill="#8a1640" opacity=".6"/><rect x="1785.0" y="155.6" width="10.2" height="1.2" fill="#1f6dc1" opacity=".6"/><rect x="1796.0" y="155.6" width="10.2" height="1.2" fill="#8a1640" opacity=".6"/><rect x="1807.0" y="155.6" width="5.2" height="1.2" fill="#2f8f8f" opacity=".6"/><rect x="1813.0" y="155.6" width="3.2" height="1.2" fill="#8a1640" opacity=".6"/><rect x="1818.0" y="155.6" width="2.2" height="1.2" fill="#8a1640" opacity=".6"/><rect x="1771.0" y="157.6" width="9.2" height="1.2" fill="#2f8f8f" opacity=".6"/><rect x="1782.0" y="157.6" width="10.2" height="1.2" fill="#8a1640" opacity=".6"/><rect x="1794.0" y="157.6" width="5.2" height="1.2" fill="#2f8f8f" opacity=".6"/><rect x="1801.0" y="157.6" width="9.2" height="1.2" fill="#8a1640" opacity=".6"/><rect x="1812.0" y="157.6" width="2.2" height="1.2" fill="#8a1640" opacity=".6"/><rect x="1771.0" y="159.5" width="13.2" height="1.2" fill="#8a1640" opacity=".6"/><rect x="1786.0" y="159.5" width="10.2" height="1.2" fill="#ee6b3b" opacity=".6"/><rect x="1798.0" y="159.5" width="4.2" height="1.2" fill="#1f6dc1" opacity=".6"/><rect x="1803.0" y="159.5" width="4.2" height="1.2" fill="#1f6dc1" opacity=".6"/><rect x="1771.0" y="161.4" width="3.2" height="1.2" fill="#2f8f8f" opacity=".6"/><rect x="1775.0" y="161.4" width="8.2" height="1.2" fill="#8a1640" opacity=".6"/><rect x="1784.0" y="161.4" width="6.2" height="1.2" fill="#2f8f8f" opacity=".6"/><rect x="1765.0" y="163.3" width="1.2" height="1.2" fill="#2f8f8f" opacity=".6"/><rect x="1765.0" y="169.1" width="12.2" height="1.2" fill="#2f8f8f" opacity=".6"/><rect x="1778.0" y="169.1" width="6.2" height="1.2" fill="#ee6b3b" opacity=".6"/><rect x="1786.0" y="169.1" width="5.2" height="1.2" fill="#2f8f8f" opacity=".6"/><rect x="1792.0" y="169.1" width="8.2" height="1.2" fill="#1f6dc1" opacity=".6"/><rect x="1801.0" y="169.1" width="12.2" height="1.2" fill="#8a1640" opacity=".6"/><rect x="1814.0" y="169.1" width="4.2" height="1.2" fill="#2f8f8f" opacity=".6"/><rect x="1820.0" y="169.1" width="6.2" height="1.2" fill="#1f6dc1" opacity=".6"/><rect x="1765.0" y="171.0" width="8.2" height="1.2" fill="#ee6b3b" opacity=".6"/><rect x="1775.0" y="171.0" width="7.2" height="1.2" fill="#8a1640" opacity=".6"/><rect x="1784.0" y="171.0" width="7.2" height="1.2" fill="#8a1640" opacity=".6"/><rect x="1793.0" y="171.0" width="10.2" height="1.2" fill="#1f6dc1" opacity=".6"/><rect x="1805.0" y="171.0" width="13.2" height="1.2" fill="#8a1640" opacity=".6"/><rect x="1820.0" y="171.0" width="7.2" height="1.2" fill="#8a1640" opacity=".6"/><rect x="1829.0" y="171.0" width="6.2" height="1.2" fill="#8a1640" opacity=".6"/><rect x="1765.0" y="172.9" width="3.2" height="1.2" fill="#8a1640" opacity=".6"/><rect x="1769.0" y="172.9" width="3.2" height="1.2" fill="#8a1640" opacity=".6"/><rect x="1774.0" y="172.9" width="3.2" height="1.2" fill="#8a1640" opacity=".6"/><rect x="1761.0" y="176.7" width="4.2" height="1.2" fill="#8a1640" opacity=".6"/><rect x="1765.0" y="178.6" width="8.2" height="1.2" fill="#8a1640" opacity=".6"/><rect x="1775.0" y="178.6" width="6.2" height="1.2" fill="#1f6dc1" opacity=".6"/><rect x="1782.0" y="178.6" width="10.2" height="1.2" fill="#8a1640" opacity=".6"/><rect x="1794.0" y="178.6" width="9.2" height="1.2" fill="#2f8f8f" opacity=".6"/><rect x="1805.0" y="178.6" width="3.2" height="1.2" fill="#2f8f8f" opacity=".6"/><rect x="1809.0" y="178.6" width="3.2" height="1.2" fill="#ee6b3b" opacity=".6"/><rect x="1765.0" y="180.5" width="3.2" height="1.2" fill="#2f8f8f" opacity=".6"/><rect x="1769.0" y="180.5" width="12.2" height="1.2" fill="#8a1640" opacity=".6"/><rect x="1783.0" y="180.5" width="3.2" height="1.2" fill="#8a1640" opacity=".6"/><rect x="1787.0" y="180.5" width="3.2" height="1.2" fill="#2f8f8f" opacity=".6"/><rect x="1791.0" y="180.5" width="9.2" height="1.2" fill="#8a1640" opacity=".6"/><rect x="1802.0" y="180.5" width="4.2" height="1.2" fill="#1f6dc1" opacity=".6"/><rect x="1765.0" y="182.5" width="11.2" height="1.2" fill="#ee6b3b" opacity=".6"/><rect x="1765.0" y="184.4" width="10.2" height="1.2" fill="#2f8f8f" opacity=".6"/><rect x="1776.0" y="184.4" width="3.2" height="1.2" fill="#ee6b3b" opacity=".6"/><rect x="1781.0" y="184.4" width="2.2" height="1.2" fill="#ee6b3b" opacity=".6"/><rect x="1784.0" y="184.4" width="6.2" height="1.2" fill="#2f8f8f" opacity=".6"/><rect x="1792.0" y="184.4" width="10.2" height="1.2" fill="#8a1640" opacity=".6"/><rect x="1803.0" y="184.4" width="3.2" height="1.2" fill="#1f6dc1" opacity=".6"/><rect x="1761.0" y="188.2" width="12.2" height="1.2" fill="#ee6b3b" opacity=".6"/><rect x="1775.0" y="188.2" width="7.2" height="1.2" fill="#8a1640" opacity=".6"/><rect x="1783.0" y="188.2" width="6.2" height="1.2" fill="#8a1640" opacity=".6"/><rect x="1790.0" y="188.2" width="2.2" height="1.2" fill="#2f8f8f" opacity=".6"/><rect x="1794.0" y="188.2" width="10.2" height="1.2" fill="#ee6b3b" opacity=".6"/><rect x="1806.0" y="188.2" width="9.2" height="1.2" fill="#ee6b3b" opacity=".6"/><rect x="1817.0" y="188.2" width="3.2" height="1.2" fill="#2f8f8f" opacity=".6"/><rect x="1822.0" y="188.2" width="8.2" height="1.2" fill="#2f8f8f" opacity=".6"/><rect x="1832.0" y="188.2" width="10.2" height="1.2" fill="#8a1640" opacity=".6"/><rect x="1844.0" y="188.2" width="8.2" height="1.2" fill="#2f8f8f" opacity=".6"/><rect x="1761.0" y="190.1" width="5.2" height="1.2" fill="#ee6b3b" opacity=".6"/><rect x="1768.0" y="190.1" width="5.2" height="1.2" fill="#8a1640" opacity=".6"/><rect x="1775.0" y="190.1" width="13.2" height="1.2" fill="#2f8f8f" opacity=".6"/><rect x="1789.0" y="190.1" width="8.2" height="1.2" fill="#2f8f8f" opacity=".6"/><rect x="1798.0" y="190.1" width="4.2" height="1.2" fill="#8a1640" opacity=".6"/><rect x="1803.0" y="190.1" width="12.2" height="1.2" fill="#2f8f8f" opacity=".6"/><rect x="1817.0" y="190.1" width="8.2" height="1.2" fill="#ee6b3b" opacity=".6"/><rect x="1826.0" y="190.1" width="3.2" height="1.2" fill="#2f8f8f" opacity=".6"/><rect x="1831.0" y="190.1" width="10.2" height="1.2" fill="#2f8f8f" opacity=".6"/><rect x="1843.0" y="190.1" width="9.2" height="1.2" fill="#ee6b3b" opacity=".6"/><rect x="1761.0" y="194.0" width="6.2" height="1.2" fill="#8a1640" opacity=".6"/><rect x="1769.0" y="194.0" width="4.2" height="1.2" fill="#ee6b3b" opacity=".6"/><rect x="1775.0" y="194.0" width="9.2" height="1.2" fill="#8a1640" opacity=".6"/><rect x="1786.0" y="194.0" width="7.2" height="1.2" fill="#2f8f8f" opacity=".6"/><rect x="1795.0" y="194.0" width="7.2" height="1.2" fill="#ee6b3b" opacity=".6"/><rect x="1803.0" y="194.0" width="6.2" height="1.2" fill="#ee6b3b" opacity=".6"/><rect x="1811.0" y="194.0" width="4.2" height="1.2" fill="#8a1640" opacity=".6"/><rect x="1817.0" y="194.0" width="8.2" height="1.2" fill="#8a1640" opacity=".6"/><rect x="1827.0" y="194.0" width="5.2" height="1.2" fill="#8a1640" opacity=".6"/><rect x="1761.0" y="195.9" width="5.2" height="1.2" fill="#ee6b3b" opacity=".6"/><rect x="1768.0" y="195.9" width="2.2" height="1.2" fill="#8a1640" opacity=".6"/><rect x="1772.0" y="195.9" width="3.2" height="1.2" fill="#ee6b3b" opacity=".6"/><rect x="1777.0" y="195.9" width="11.2" height="1.2" fill="#8a1640" opacity=".6"/><rect x="1790.0" y="195.9" width="2.2" height="1.2" fill="#2f8f8f" opacity=".6"/><rect x="1794.0" y="195.9" width="12.2" height="1.2" fill="#ee6b3b" opacity=".6"/><rect x="1807.0" y="195.9" width="11.2" height="1.2" fill="#8a1640" opacity=".6"/><rect x="1819.0" y="195.9" width="6.2" height="1.2" fill="#2f8f8f" opacity=".6"/><rect x="1761.0" y="197.8" width="8.2" height="1.2" fill="#8a1640" opacity=".6"/><rect x="1771.0" y="197.8" width="13.2" height="1.2" fill="#1f6dc1" opacity=".6"/><rect x="1785.0" y="197.8" width="6.2" height="1.2" fill="#2f8f8f" opacity=".6"/><rect x="1761.0" y="199.7" width="12.2" height="1.2" fill="#ee6b3b" opacity=".6"/><rect x="1774.0" y="199.7" width="11.2" height="1.2" fill="#8a1640" opacity=".6"/><rect x="1761.0" y="201.6" width="8.2" height="1.2" fill="#2f8f8f" opacity=".6"/><rect x="1771.0" y="201.6" width="10.2" height="1.2" fill="#ee6b3b" opacity=".6"/><rect x="1783.0" y="201.6" width="9.2" height="1.2" fill="#8a1640" opacity=".6"/><rect x="1761.0" y="203.5" width="12.2" height="1.2" fill="#8a1640" opacity=".6"/><rect x="1775.0" y="203.5" width="12.2" height="1.2" fill="#2f8f8f" opacity=".6"/><rect x="1789.0" y="203.5" width="5.2" height="1.2" fill="#8a1640" opacity=".6"/><rect x="1795.0" y="203.5" width="2.2" height="1.2" fill="#ee6b3b" opacity=".6"/><rect x="1799.0" y="203.5" width="7.2" height="1.2" fill="#8a1640" opacity=".6"/><rect x="1808.0" y="203.5" width="1.2" height="1.2" fill="#8a1640" opacity=".6"/><rect x="1761.0" y="205.5" width="12.2" height="1.2" fill="#8a1640" opacity=".6"/><rect x="1775.0" y="205.5" width="10.2" height="1.2" fill="#2f8f8f" opacity=".6"/><rect x="1786.0" y="205.5" width="9.2" height="1.2" fill="#2f8f8f" opacity=".6"/><rect x="1796.0" y="205.5" width="9.2" height="1.2" fill="#8a1640" opacity=".6"/><rect x="1806.0" y="205.5" width="10.2" height="1.2" fill="#8a1640" opacity=".6"/><rect x="1761.0" y="209.3" width="3.2" height="1.2" fill="#2f8f8f" opacity=".6"/><rect x="1766.0" y="209.3" width="3.2" height="1.2" fill="#2f8f8f" opacity=".6"/><rect x="1771.0" y="209.3" width="9.2" height="1.2" fill="#2f8f8f" opacity=".6"/><rect x="1781.0" y="209.3" width="6.2" height="1.2" fill="#ee6b3b" opacity=".6"/><rect x="1765.0" y="211.2" width="5.2" height="1.2" fill="#ee6b3b" opacity=".6"/><rect x="1772.0" y="211.2" width="12.2" height="1.2" fill="#1f6dc1" opacity=".6"/><rect x="1786.0" y="211.2" width="8.2" height="1.2" fill="#8a1640" opacity=".6"/><rect x="1796.0" y="211.2" width="12.2" height="1.2" fill="#2f8f8f" opacity=".6"/><rect x="1809.0" y="211.2" width="11.2" height="1.2" fill="#2f8f8f" opacity=".6"/><rect x="1822.0" y="211.2" width="5.2" height="1.2" fill="#8a1640" opacity=".6"/><rect x="1829.0" y="211.2" width="4.2" height="1.2" fill="#2f8f8f" opacity=".6"/><rect x="1835.0" y="211.2" width="12.2" height="1.2" fill="#2f8f8f" opacity=".6"/><rect x="1849.0" y="211.2" width="3.2" height="1.2" fill="#8a1640" opacity=".6"/><rect x="1765.0" y="213.1" width="4.2" height="1.2" fill="#8a1640" opacity=".6"/><rect x="1771.0" y="213.1" width="2.2" height="1.2" fill="#1f6dc1" opacity=".6"/><rect x="1775.0" y="213.1" width="12.2" height="1.2" fill="#8a1640" opacity=".6"/><rect x="1789.0" y="213.1" width="5.2" height="1.2" fill="#2f8f8f" opacity=".6"/><rect x="1796.0" y="213.1" width="6.2" height="1.2" fill="#2f8f8f" opacity=".6"/><rect x="1804.0" y="213.1" width="6.2" height="1.2" fill="#1f6dc1" opacity=".6"/><rect x="1812.0" y="213.1" width="9.2" height="1.2" fill="#8a1640" opacity=".6"/><rect x="1822.0" y="213.1" width="10.2" height="1.2" fill="#ee6b3b" opacity=".6"/><rect x="1834.0" y="213.1" width="3.2" height="1.2" fill="#1f6dc1" opacity=".6"/><rect x="1838.0" y="213.1" width="6.2" height="1.2" fill="#1f6dc1" opacity=".6"/><rect x="1845.0" y="213.1" width="7.2" height="1.2" fill="#1f6dc1" opacity=".6"/><rect x="1765.0" y="215.0" width="8.2" height="1.2" fill="#ee6b3b" opacity=".6"/><rect x="1774.0" y="215.0" width="3.2" height="1.2" fill="#8a1640" opacity=".6"/><rect x="1778.0" y="215.0" width="4.2" height="1.2" fill="#2f8f8f" opacity=".6"/><rect x="1784.0" y="215.0" width="6.2" height="1.2" fill="#2f8f8f" opacity=".6"/><rect x="1791.0" y="215.0" width="11.2" height="1.2" fill="#8a1640" opacity=".6"/><rect x="1804.0" y="215.0" width="10.2" height="1.2" fill="#2f8f8f" opacity=".6"/><rect x="1815.0" y="215.0" width="13.2" height="1.2" fill="#2f8f8f" opacity=".6"/><rect x="1829.0" y="215.0" width="9.2" height="1.2" fill="#1f6dc1" opacity=".6"/><rect x="1840.0" y="215.0" width="2.2" height="1.2" fill="#ee6b3b" opacity=".6"/><rect x="1843.0" y="215.0" width="9.2" height="1.2" fill="#2f8f8f" opacity=".6"/><rect x="1765.0" y="217.0" width="8.2" height="1.2" fill="#2f8f8f" opacity=".6"/><rect x="1775.0" y="217.0" width="4.2" height="1.2" fill="#1f6dc1" opacity=".6"/><rect x="1781.0" y="217.0" width="8.2" height="1.2" fill="#2f8f8f" opacity=".6"/><rect x="1790.0" y="217.0" width="7.2" height="1.2" fill="#8a1640" opacity=".6"/><rect x="1799.0" y="217.0" width="7.2" height="1.2" fill="#8a1640" opacity=".6"/><rect x="1808.0" y="217.0" width="3.2" height="1.2" fill="#ee6b3b" opacity=".6"/><rect x="1813.0" y="217.0" width="2.2" height="1.2" fill="#2f8f8f" opacity=".6"/><rect x="1817.0" y="217.0" width="6.2" height="1.2" fill="#2f8f8f" opacity=".6"/><rect x="1824.0" y="217.0" width="8.2" height="1.2" fill="#1f6dc1" opacity=".6"/><rect x="1834.0" y="217.0" width="3.2" height="1.2" fill="#2f8f8f" opacity=".6"/><rect x="1839.0" y="217.0" width="3.2" height="1.2" fill="#8a1640" opacity=".6"/><rect x="1765.0" y="218.9" width="6.2" height="1.2" fill="#8a1640" opacity=".6"/><rect x="1772.0" y="218.9" width="12.2" height="1.2" fill="#2f8f8f" opacity=".6"/><rect x="1786.0" y="218.9" width="4.2" height="1.2" fill="#ee6b3b" opacity=".6"/><rect x="1792.0" y="218.9" width="8.2" height="1.2" fill="#8a1640" opacity=".6"/><rect x="1802.0" y="218.9" width="5.2" height="1.2" fill="#8a1640" opacity=".6"/><rect x="1809.0" y="218.9" width="4.2" height="1.2" fill="#8a1640" opacity=".6"/><rect x="1765.0" y="220.8" width="8.2" height="1.2" fill="#8a1640" opacity=".6"/><rect x="1775.0" y="220.8" width="5.2" height="1.2" fill="#2f8f8f" opacity=".6"/><rect x="1781.0" y="220.8" width="2.2" height="1.2" fill="#2f8f8f" opacity=".6"/><rect x="1785.0" y="220.8" width="9.2" height="1.2" fill="#8a1640" opacity=".6"/><rect x="1795.0" y="220.8" width="11.2" height="1.2" fill="#8a1640" opacity=".6"/><rect x="1765.0" y="222.7" width="9.2" height="1.2" fill="#8a1640" opacity=".6"/><rect x="1776.0" y="222.7" width="4.2" height="1.2" fill="#ee6b3b" opacity=".6"/><rect x="1782.0" y="222.7" width="8.2" height="1.2" fill="#2f8f8f" opacity=".6"/><rect x="1792.0" y="222.7" width="6.2" height="1.2" fill="#2f8f8f" opacity=".6"/><rect x="1800.0" y="222.7" width="8.2" height="1.2" fill="#2f8f8f" opacity=".6"/><rect x="1761.0" y="228.4" width="8.2" height="1.2" fill="#2f8f8f" opacity=".6"/><rect x="1770.0" y="228.4" width="6.2" height="1.2" fill="#1f6dc1" opacity=".6"/><rect x="1778.0" y="228.4" width="12.2" height="1.2" fill="#1f6dc1" opacity=".6"/><rect x="1791.0" y="228.4" width="4.2" height="1.2" fill="#2f8f8f" opacity=".6"/><rect x="1796.0" y="228.4" width="3.2" height="1.2" fill="#ee6b3b" opacity=".6"/><rect x="1765.0" y="230.4" width="9.2" height="1.2" fill="#8a1640" opacity=".6"/><rect x="1765.0" y="232.3" width="4.2" height="1.2" fill="#2f8f8f" opacity=".6"/><rect x="1775.0" y="234.2" width="8.2" height="1.2" fill="#ee6b3b" opacity=".6"/><rect x="1785.0" y="234.2" width="5.2" height="1.2" fill="#ee6b3b" opacity=".6"/><rect x="1791.0" y="234.2" width="4.2" height="1.2" fill="#2f8f8f" opacity=".6"/><rect x="1797.0" y="234.2" width="3.2" height="1.2" fill="#2f8f8f" opacity=".6"/><rect x="1801.0" y="234.2" width="7.2" height="1.2" fill="#2f8f8f" opacity=".6"/><rect x="1810.0" y="234.2" width="5.2" height="1.2" fill="#8a1640" opacity=".6"/><rect x="1817.0" y="234.2" width="8.2" height="1.2" fill="#1f6dc1" opacity=".6"/><rect x="1827.0" y="234.2" width="7.2" height="1.2" fill="#8a1640" opacity=".6"/><rect x="1775.0" y="236.1" width="8.2" height="1.2" fill="#2f8f8f" opacity=".6"/><rect x="1785.0" y="236.1" width="2.2" height="1.2" fill="#1f6dc1" opacity=".6"/><rect x="1789.0" y="236.1" width="11.2" height="1.2" fill="#2f8f8f" opacity=".6"/><rect x="1801.0" y="236.1" width="10.2" height="1.2" fill="#8a1640" opacity=".6"/><rect x="1775.0" y="238.0" width="12.2" height="1.2" fill="#8a1640" opacity=".6"/><rect x="1788.0" y="238.0" width="3.2" height="1.2" fill="#2f8f8f" opacity=".6"/><rect x="1792.0" y="238.0" width="8.2" height="1.2" fill="#1f6dc1" opacity=".6"/><rect x="1802.0" y="238.0" width="9.2" height="1.2" fill="#1f6dc1" opacity=".6"/><rect x="1813.0" y="238.0" width="2.2" height="1.2" fill="#ee6b3b" opacity=".6"/><rect x="1816.0" y="238.0" width="0.2" height="1.2" fill="#2f8f8f" opacity=".6"/><rect x="1775.0" y="239.9" width="11.2" height="1.2" fill="#1f6dc1" opacity=".6"/><rect x="1787.0" y="239.9" width="3.2" height="1.2" fill="#1f6dc1" opacity=".6"/><rect x="1792.0" y="239.9" width="9.2" height="1.2" fill="#1f6dc1" opacity=".6"/><rect x="1802.0" y="239.9" width="3.2" height="1.2" fill="#ee6b3b" opacity=".6"/><rect x="1806.0" y="239.9" width="4.2" height="1.2" fill="#8a1640" opacity=".6"/><rect x="1812.0" y="239.9" width="3.2" height="1.2" fill="#8a1640" opacity=".6"/><rect x="1817.0" y="239.9" width="13.2" height="1.2" fill="#2f8f8f" opacity=".6"/><rect x="1832.0" y="239.9" width="1.2" height="1.2" fill="#8a1640" opacity=".6"/><rect x="1771.0" y="241.9" width="2.2" height="1.2" fill="#8a1640" opacity=".6"/><rect x="1763.0" y="247.6" width="5.2" height="1.2" fill="#8a1640" opacity=".6"/><rect x="1769.0" y="247.6" width="12.2" height="1.2" fill="#2f8f8f" opacity=".6"/><rect x="1783.0" y="247.6" width="4.2" height="1.2" fill="#2f8f8f" opacity=".6"/><rect x="1789.0" y="247.6" width="10.2" height="1.2" fill="#2f8f8f" opacity=".6"/><rect x="1801.0" y="247.6" width="13.2" height="1.2" fill="#8a1640" opacity=".6"/><rect x="1815.0" y="247.6" width="3.2" height="1.2" fill="#8a1640" opacity=".6"/><rect x="1820.0" y="247.6" width="10.2" height="1.2" fill="#8a1640" opacity=".6"/><rect x="1831.0" y="247.6" width="8.2" height="1.2" fill="#2f8f8f" opacity=".6"/><rect x="1840.0" y="247.6" width="11.2" height="1.2" fill="#8a1640" opacity=".6"/><rect x="1852.0" y="247.6" width="0.2" height="1.2" fill="#2f8f8f" opacity=".6"/><rect x="1763.0" y="249.5" width="6.2" height="1.2" fill="#2f8f8f" opacity=".6"/><rect x="1771.0" y="249.5" width="5.2" height="1.2" fill="#1f6dc1" opacity=".6"/><rect x="1778.0" y="249.5" width="5.2" height="1.2" fill="#8a1640" opacity=".6"/><rect x="1784.0" y="249.5" width="2.2" height="1.2" fill="#1f6dc1" opacity=".6"/><rect x="1788.0" y="249.5" width="12.2" height="1.2" fill="#2f8f8f" opacity=".6"/><rect x="1801.0" y="249.5" width="2.2" height="1.2" fill="#ee6b3b" opacity=".6"/><rect x="1805.0" y="249.5" width="12.2" height="1.2" fill="#2f8f8f" opacity=".6"/><rect x="1819.0" y="249.5" width="3.2" height="1.2" fill="#2f8f8f" opacity=".6"/><rect x="1823.0" y="249.5" width="4.2" height="1.2" fill="#1f6dc1" opacity=".6"/><rect x="1763.0" y="251.4" width="5.2" height="1.2" fill="#1f6dc1" opacity=".6"/><rect x="1769.0" y="251.4" width="13.2" height="1.2" fill="#2f8f8f" opacity=".6"/><rect x="1784.0" y="251.4" width="8.2" height="1.2" fill="#2f8f8f" opacity=".6"/><rect x="1794.0" y="251.4" width="8.2" height="1.2" fill="#ee6b3b" opacity=".6"/><rect x="1803.0" y="251.4" width="6.2" height="1.2" fill="#2f8f8f" opacity=".6"/><rect x="1811.0" y="251.4" width="3.2" height="1.2" fill="#ee6b3b" opacity=".6"/><rect x="1816.0" y="251.4" width="5.2" height="1.2" fill="#2f8f8f" opacity=".6"/><rect x="1822.0" y="251.4" width="5.2" height="1.2" fill="#1f6dc1" opacity=".6"/><rect x="1828.0" y="251.4" width="6.2" height="1.2" fill="#8a1640" opacity=".6"/><rect x="1836.0" y="251.4" width="3.2" height="1.2" fill="#8a1640" opacity=".6"/><rect x="1841.0" y="251.4" width="11.2" height="1.2" fill="#ee6b3b" opacity=".6"/><rect x="1763.0" y="253.4" width="9.2" height="1.2" fill="#1f6dc1" opacity=".6"/><rect x="1774.0" y="253.4" width="2.2" height="1.2" fill="#8a1640" opacity=".6"/><rect x="1777.0" y="253.4" width="6.2" height="1.2" fill="#8a1640" opacity=".6"/><rect x="1763.0" y="255.3" width="2.2" height="1.2" fill="#8a1640" opacity=".6"/><rect x="1766.0" y="255.3" width="8.2" height="1.2" fill="#8a1640" opacity=".6"/><rect x="1763.0" y="257.2" width="2.2" height="1.2" fill="#ee6b3b" opacity=".6"/><rect x="1767.0" y="257.2" width="4.2" height="1.2" fill="#2f8f8f" opacity=".6"/><rect x="1763.0" y="259.1" width="13.2" height="1.2" fill="#8a1640" opacity=".6"/><rect x="1777.0" y="259.1" width="4.2" height="1.2" fill="#2f8f8f" opacity=".6"/><rect x="1782.0" y="259.1" width="4.2" height="1.2" fill="#2f8f8f" opacity=".6"/><rect x="1788.0" y="259.1" width="10.2" height="1.2" fill="#1f6dc1" opacity=".6"/><rect x="1763.0" y="261.0" width="6.2" height="1.2" fill="#2f8f8f" opacity=".6"/><rect x="1771.0" y="261.0" width="8.2" height="1.2" fill="#8a1640" opacity=".6"/><rect x="1781.0" y="261.0" width="7.2" height="1.2" fill="#1f6dc1" opacity=".6"/><rect x="1789.0" y="261.0" width="3.2" height="1.2" fill="#8a1640" opacity=".6"/><rect x="1793.0" y="261.0" width="1.2" height="1.2" fill="#8a1640" opacity=".6"/><rect x="1763.0" y="262.9" width="4.2" height="1.2" fill="#8a1640" opacity=".6"/><rect x="1763.0" y="266.8" width="5.2" height="1.2" fill="#1f6dc1" opacity=".6"/><rect x="1770.0" y="266.8" width="6.2" height="1.2" fill="#8a1640" opacity=".6"/><rect x="1778.0" y="266.8" width="3.2" height="1.2" fill="#8a1640" opacity=".6"/><rect x="1783.0" y="266.8" width="9.2" height="1.2" fill="#ee6b3b" opacity=".6"/><rect x="1794.0" y="266.8" width="10.2" height="1.2" fill="#1f6dc1" opacity=".6"/><rect x="1805.0" y="266.8" width="7.2" height="1.2" fill="#2f8f8f" opacity=".6"/><rect x="1814.0" y="266.8" width="9.2" height="1.2" fill="#8a1640" opacity=".6"/><rect x="1825.0" y="266.8" width="8.2" height="1.2" fill="#ee6b3b" opacity=".6"/><rect x="1763.0" y="268.7" width="8.2" height="1.2" fill="#8a1640" opacity=".6"/><rect x="1773.0" y="268.7" width="2.2" height="1.2" fill="#1f6dc1" opacity=".6"/><rect x="1776.0" y="268.7" width="2.2" height="1.2" fill="#2f8f8f" opacity=".6"/><rect x="1779.0" y="268.7" width="4.2" height="1.2" fill="#8a1640" opacity=".6"/><rect x="1761.0" y="272.5" width="7.2" height="1.2" fill="#2f8f8f" opacity=".6"/><rect x="1770.0" y="272.5" width="7.2" height="1.2" fill="#8a1640" opacity=".6"/><rect x="1778.0" y="272.5" width="6.2" height="1.2" fill="#2f8f8f" opacity=".6"/><rect x="1786.0" y="272.5" width="13.2" height="1.2" fill="#2f8f8f" opacity=".6"/><rect x="1801.0" y="272.5" width="6.2" height="1.2" fill="#8a1640" opacity=".6"/><rect x="1809.0" y="272.5" width="0.2" height="1.2" fill="#8a1640" opacity=".6"/><rect x="1761.0" y="274.4" width="3.2" height="1.2" fill="#8a1640" opacity=".6"/><rect x="1765.0" y="274.4" width="3.2" height="1.2" fill="#1f6dc1" opacity=".6"/><rect x="1770.0" y="274.4" width="9.2" height="1.2" fill="#8a1640" opacity=".6"/><rect x="1781.0" y="274.4" width="6.2" height="1.2" fill="#1f6dc1" opacity=".6"/><rect x="1789.0" y="274.4" width="4.2" height="1.2" fill="#1f6dc1" opacity=".6"/><rect x="1794.0" y="274.4" width="2.2" height="1.2" fill="#8a1640" opacity=".6"/><rect x="1798.0" y="274.4" width="6.2" height="1.2" fill="#8a1640" opacity=".6"/><rect x="1806.0" y="274.4" width="4.2" height="1.2" fill="#8a1640" opacity=".6"/><rect x="1811.0" y="274.4" width="7.2" height="1.2" fill="#8a1640" opacity=".6"/><rect x="1820.0" y="274.4" width="9.2" height="1.2" fill="#2f8f8f" opacity=".6"/><rect x="1831.0" y="274.4" width="3.2" height="1.2" fill="#8a1640" opacity=".6"/><rect x="1835.0" y="274.4" width="7.2" height="1.2" fill="#8a1640" opacity=".6"/><rect x="1761.0" y="278.3" width="5.2" height="1.2" fill="#1f6dc1" opacity=".6"/><rect x="1767.0" y="278.3" width="12.2" height="1.2" fill="#8a1640" opacity=".6"/><rect x="1781.0" y="278.3" width="10.2" height="1.2" fill="#8a1640" opacity=".6"/><rect x="1793.0" y="278.3" width="4.2" height="1.2" fill="#1f6dc1" opacity=".6"/><rect x="1798.0" y="278.3" width="3.2" height="1.2" fill="#2f8f8f" opacity=".6"/><rect x="1803.0" y="278.3" width="3.2" height="1.2" fill="#ee6b3b" opacity=".6"/><rect x="1807.0" y="278.3" width="6.2" height="1.2" fill="#1f6dc1" opacity=".6"/><rect x="1761.0" y="280.2" width="9.2" height="1.2" fill="#ee6b3b" opacity=".6"/><rect x="1771.0" y="280.2" width="4.2" height="1.2" fill="#1f6dc1" opacity=".6"/><rect x="1777.0" y="280.2" width="11.2" height="1.2" fill="#2f8f8f" opacity=".6"/><rect x="1789.0" y="280.2" width="2.2" height="1.2" fill="#8a1640" opacity=".6"/><rect x="1761.0" y="282.1" width="3.2" height="1.2" fill="#8a1640" opacity=".6"/><rect x="1766.0" y="282.1" width="6.2" height="1.2" fill="#2f8f8f" opacity=".6"/><rect x="1774.0" y="282.1" width="6.2" height="1.2" fill="#2f8f8f" opacity=".6"/><rect x="1782.0" y="282.1" width="13.2" height="1.2" fill="#2f8f8f" opacity=".6"/><rect x="1796.0" y="282.1" width="9.2" height="1.2" fill="#ee6b3b" opacity=".6"/><rect x="1806.0" y="282.1" width="5.2" height="1.2" fill="#ee6b3b" opacity=".6"/><rect x="1812.0" y="282.1" width="6.2" height="1.2" fill="#8a1640" opacity=".6"/><rect x="1819.0" y="282.1" width="7.2" height="1.2" fill="#8a1640" opacity=".6"/><rect x="1828.0" y="282.1" width="6.2" height="1.2" fill="#ee6b3b" opacity=".6"/><rect x="1836.0" y="282.1" width="10.2" height="1.2" fill="#ee6b3b" opacity=".6"/><rect x="1848.0" y="282.1" width="3.2" height="1.2" fill="#2f8f8f" opacity=".6"/><rect x="1761.0" y="284.0" width="2.2" height="1.2" fill="#8a1640" opacity=".6"/><rect x="1764.0" y="284.0" width="9.2" height="1.2" fill="#8a1640" opacity=".6"/><rect x="1774.0" y="284.0" width="9.2" height="1.2" fill="#2f8f8f" opacity=".6"/><rect x="1784.0" y="284.0" width="6.2" height="1.2" fill="#ee6b3b" opacity=".6"/><rect x="1791.0" y="284.0" width="2.2" height="1.2" fill="#ee6b3b" opacity=".6"/><rect x="1795.0" y="284.0" width="11.2" height="1.2" fill="#ee6b3b" opacity=".6"/><rect x="1807.0" y="284.0" width="7.2" height="1.2" fill="#8a1640" opacity=".6"/><rect x="1815.0" y="284.0" width="6.2" height="1.2" fill="#8a1640" opacity=".6"/><rect x="1761.0" y="285.9" width="12.2" height="1.2" fill="#8a1640" opacity=".6"/><rect x="1774.0" y="285.9" width="12.2" height="1.2" fill="#8a1640" opacity=".6"/><rect x="1788.0" y="285.9" width="8.2" height="1.2" fill="#2f8f8f" opacity=".6"/><rect x="1761.0" y="289.8" width="2.2" height="1.2" fill="#2f8f8f" opacity=".6"/><rect x="1765.0" y="289.8" width="4.2" height="1.2" fill="#8a1640" opacity=".6"/><rect x="1770.0" y="289.8" width="6.2" height="1.2" fill="#8a1640" opacity=".6"/><rect x="1778.0" y="289.8" width="13.2" height="1.2" fill="#2f8f8f" opacity=".6"/><rect x="1792.0" y="289.8" width="2.2" height="1.2" fill="#8a1640" opacity=".6"/><rect x="1796.0" y="289.8" width="8.2" height="1.2" fill="#2f8f8f" opacity=".6"/><rect x="1806.0" y="289.8" width="3.2" height="1.2" fill="#8a1640" opacity=".6"/><rect x="1761.0" y="291.7" width="3.2" height="1.2" fill="#ee6b3b" opacity=".6"/><rect x="1765.0" y="291.7" width="9.2" height="1.2" fill="#8a1640" opacity=".6"/><rect x="1776.0" y="291.7" width="3.2" height="1.2" fill="#1f6dc1" opacity=".6"/><rect x="1780.0" y="291.7" width="8.2" height="1.2" fill="#2f8f8f" opacity=".6"/><rect x="1790.0" y="291.7" width="4.2" height="1.2" fill="#2f8f8f" opacity=".6"/><rect x="1796.0" y="291.7" width="3.2" height="1.2" fill="#2f8f8f" opacity=".6"/><rect x="1800.0" y="291.7" width="8.2" height="1.2" fill="#2f8f8f" opacity=".6"/><rect x="1761.0" y="295.5" width="8.2" height="1.2" fill="#2f8f8f" opacity=".6"/><rect x="1771.0" y="295.5" width="6.2" height="1.2" fill="#1f6dc1" opacity=".6"/><rect x="1778.0" y="295.5" width="6.2" height="1.2" fill="#2f8f8f" opacity=".6"/><rect x="1786.0" y="295.5" width="7.2" height="1.2" fill="#1f6dc1" opacity=".6"/><rect x="1795.0" y="295.5" width="2.2" height="1.2" fill="#8a1640" opacity=".6"/><rect x="1799.0" y="295.5" width="12.2" height="1.2" fill="#ee6b3b" opacity=".6"/><rect x="1813.0" y="295.5" width="13.2" height="1.2" fill="#1f6dc1" opacity=".6"/><rect x="1827.0" y="295.5" width="2.2" height="1.2" fill="#1f6dc1" opacity=".6"/><rect x="1830.0" y="295.5" width="5.2" height="1.2" fill="#8a1640" opacity=".6"/><rect x="1761.0" y="297.4" width="8.2" height="1.2" fill="#8a1640" opacity=".6"/><rect x="1771.0" y="297.4" width="9.2" height="1.2" fill="#8a1640" opacity=".6"/><rect x="1781.0" y="297.4" width="4.2" height="1.2" fill="#8a1640" opacity=".6"/><rect x="1786.0" y="297.4" width="10.2" height="1.2" fill="#ee6b3b" opacity=".6"/><rect x="1798.0" y="297.4" width="8.2" height="1.2" fill="#8a1640" opacity=".6"/><rect x="1808.0" y="297.4" width="11.2" height="1.2" fill="#2f8f8f" opacity=".6"/><rect x="1821.0" y="297.4" width="10.2" height="1.2" fill="#ee6b3b" opacity=".6"/><rect x="1832.0" y="297.4" width="2.2" height="1.2" fill="#2f8f8f" opacity=".6"/><rect x="1761.0" y="301.3" width="10.2" height="1.2" fill="#ee6b3b" opacity=".6"/><rect x="1772.0" y="301.3" width="3.2" height="1.2" fill="#1f6dc1" opacity=".6"/><rect x="1777.0" y="301.3" width="5.2" height="1.2" fill="#2f8f8f" opacity=".6"/><rect x="1783.0" y="301.3" width="2.2" height="1.2" fill="#1f6dc1" opacity=".6"/><rect x="1787.0" y="301.3" width="2.2" height="1.2" fill="#8a1640" opacity=".6"/><rect x="1791.0" y="301.3" width="8.2" height="1.2" fill="#8a1640" opacity=".6"/><rect x="1801.0" y="301.3" width="3.2" height="1.2" fill="#2f8f8f" opacity=".6"/><rect x="1761.0" y="303.2" width="12.2" height="1.2" fill="#8a1640" opacity=".6"/><rect x="1774.0" y="303.2" width="11.2" height="1.2" fill="#1f6dc1" opacity=".6"/><rect x="1787.0" y="303.2" width="5.2" height="1.2" fill="#8a1640" opacity=".6"/><rect x="1794.0" y="303.2" width="4.2" height="1.2" fill="#8a1640" opacity=".6"/><rect x="1799.0" y="303.2" width="2.2" height="1.2" fill="#1f6dc1" opacity=".6"/><rect x="1803.0" y="303.2" width="4.2" height="1.2" fill="#1f6dc1" opacity=".6"/><rect x="1809.0" y="303.2" width="3.2" height="1.2" fill="#ee6b3b" opacity=".6"/><rect x="1813.0" y="303.2" width="13.2" height="1.2" fill="#8a1640" opacity=".6"/><rect x="1827.0" y="303.2" width="2.2" height="1.2" fill="#8a1640" opacity=".6"/><rect x="1831.0" y="303.2" width="2.2" height="1.2" fill="#2f8f8f" opacity=".6"/><rect x="1835.0" y="303.2" width="3.2" height="1.2" fill="#1f6dc1" opacity=".6"/><rect x="1840.0" y="303.2" width="9.2" height="1.2" fill="#8a1640" opacity=".6"/><rect x="1851.0" y="303.2" width="1.2" height="1.2" fill="#2f8f8f" opacity=".6"/><rect x="1761.0" y="308.9" width="6.2" height="1.2" fill="#8a1640" opacity=".6"/><rect x="1768.0" y="308.9" width="2.2" height="1.2" fill="#1f6dc1" opacity=".6"/><rect x="1761.0" y="312.7" width="7.2" height="1.2" fill="#1f6dc1" opacity=".6"/><rect x="1770.0" y="312.7" width="9.2" height="1.2" fill="#ee6b3b" opacity=".6"/><rect x="1780.0" y="312.7" width="2.2" height="1.2" fill="#8a1640" opacity=".6"/><rect x="1784.0" y="312.7" width="9.2" height="1.2" fill="#ee6b3b" opacity=".6"/><rect x="1795.0" y="312.7" width="11.2" height="1.2" fill="#8a1640" opacity=".6"/><rect x="1808.0" y="312.7" width="4.2" height="1.2" fill="#8a1640" opacity=".6"/><rect x="1814.0" y="312.7" width="8.2" height="1.2" fill="#8a1640" opacity=".6"/><rect x="1823.0" y="312.7" width="4.2" height="1.2" fill="#2f8f8f" opacity=".6"/><rect x="1829.0" y="312.7" width="7.2" height="1.2" fill="#8a1640" opacity=".6"/><rect x="1838.0" y="312.7" width="10.2" height="1.2" fill="#8a1640" opacity=".6"/><rect x="1850.0" y="312.7" width="2.2" height="1.2" fill="#8a1640" opacity=".6"/><rect x="1761.0" y="314.7" width="4.2" height="1.2" fill="#8a1640" opacity=".6"/><rect x="1767.0" y="314.7" width="7.2" height="1.2" fill="#8a1640" opacity=".6"/><rect x="1776.0" y="314.7" width="10.2" height="1.2" fill="#8a1640" opacity=".6"/><rect x="1787.0" y="314.7" width="0.2" height="1.2" fill="#1f6dc1" opacity=".6"/><rect x="1761.0" y="316.6" width="4.2" height="1.2" fill="#8a1640" opacity=".6"/><rect x="1766.0" y="316.6" width="11.2" height="1.2" fill="#2f8f8f" opacity=".6"/><rect x="1779.0" y="316.6" width="3.2" height="1.2" fill="#ee6b3b" opacity=".6"/><rect x="1783.0" y="316.6" width="9.2" height="1.2" fill="#2f8f8f" opacity=".6"/><rect x="1793.0" y="316.6" width="12.2" height="1.2" fill="#8a1640" opacity=".6"/><rect x="1807.0" y="316.6" width="5.2" height="1.2" fill="#8a1640" opacity=".6"/><rect x="1814.0" y="316.6" width="4.2" height="1.2" fill="#8a1640" opacity=".6"/><rect x="1761.0" y="320.4" width="4.2" height="1.2" fill="#2f8f8f" opacity=".6"/><rect x="1767.0" y="320.4" width="6.2" height="1.2" fill="#8a1640" opacity=".6"/><rect x="1775.0" y="320.4" width="4.2" height="1.2" fill="#2f8f8f" opacity=".6"/><rect x="1781.0" y="320.4" width="4.2" height="1.2" fill="#ee6b3b" opacity=".6"/><rect x="1765.0" y="322.3" width="6.2" height="1.2" fill="#8a1640" opacity=".6"/><rect x="1773.0" y="322.3" width="0.2" height="1.2" fill="#2f8f8f" opacity=".6"/><rect x="1773.0" y="324.2" width="2.2" height="1.2" fill="#ee6b3b" opacity=".6"/><rect x="1776.0" y="324.2" width="8.2" height="1.2" fill="#ee6b3b" opacity=".6"/><rect x="1786.0" y="324.2" width="2.2" height="1.2" fill="#2f8f8f" opacity=".6"/><rect x="1773.0" y="326.2" width="8.2" height="1.2" fill="#ee6b3b" opacity=".6"/><rect x="1783.0" y="326.2" width="2.2" height="1.2" fill="#8a1640" opacity=".6"/><rect x="1773.0" y="328.1" width="2.2" height="1.2" fill="#2f8f8f" opacity=".6"/><rect x="1777.0" y="328.1" width="9.2" height="1.2" fill="#8a1640" opacity=".6"/><rect x="1788.0" y="328.1" width="0.2" height="1.2" fill="#2f8f8f" opacity=".6"/><rect x="1773.0" y="330.0" width="6.2" height="1.2" fill="#8a1640" opacity=".6"/><rect x="1781.0" y="330.0" width="4.2" height="1.2" fill="#2f8f8f" opacity=".6"/><rect x="1773.0" y="331.9" width="6.2" height="1.2" fill="#1f6dc1" opacity=".6"/><rect x="1781.0" y="331.9" width="2.2" height="1.2" fill="#ee6b3b" opacity=".6"/><rect x="1773.0" y="333.8" width="7.2" height="1.2" fill="#8a1640" opacity=".6"/><rect x="1781.0" y="333.8" width="1.2" height="1.2" fill="#ee6b3b" opacity=".6"/><rect x="1769.0" y="335.7" width="2.2" height="1.2" fill="#2f8f8f" opacity=".6"/><rect x="1765.0" y="337.7" width="1.2" height="1.2" fill="#8a1640" opacity=".6"/><rect x="1761.0" y="343.4" width="6.2" height="1.2" fill="#2f8f8f" opacity=".6"/><rect x="1769.0" y="343.4" width="11.2" height="1.2" fill="#2f8f8f" opacity=".6"/><rect x="1782.0" y="343.4" width="13.2" height="1.2" fill="#8a1640" opacity=".6"/><rect x="1797.0" y="343.4" width="2.2" height="1.2" fill="#ee6b3b" opacity=".6"/><rect x="1800.0" y="343.4" width="5.2" height="1.2" fill="#8a1640" opacity=".6"/><rect x="1795.0" y="345.3" width="8.2" height="1.2" fill="#1f6dc1" opacity=".6"/><rect x="1805.0" y="345.3" width="7.2" height="1.2" fill="#8a1640" opacity=".6"/><rect x="1813.0" y="345.3" width="9.2" height="1.2" fill="#ee6b3b" opacity=".6"/><rect x="1824.0" y="345.3" width="12.2" height="1.2" fill="#8a1640" opacity=".6"/><rect x="1837.0" y="345.3" width="2.2" height="1.2" fill="#8a1640" opacity=".6"/><rect x="1841.0" y="345.3" width="7.2" height="1.2" fill="#2f8f8f" opacity=".6"/><rect x="1849.0" y="345.3" width="3.2" height="1.2" fill="#2f8f8f" opacity=".6"/><rect x="1761.0" y="349.1" width="5.2" height="1.2" fill="#1f6dc1" opacity=".6"/><rect x="1768.0" y="349.1" width="6.2" height="1.2" fill="#8a1640" opacity=".6"/><rect x="1775.0" y="349.1" width="5.2" height="1.2" fill="#2f8f8f" opacity=".6"/><rect x="1782.0" y="349.1" width="9.2" height="1.2" fill="#ee6b3b" opacity=".6"/><rect x="1792.0" y="349.1" width="0.2" height="1.2" fill="#8a1640" opacity=".6"/><rect x="1761.0" y="351.1" width="13.2" height="1.2" fill="#ee6b3b" opacity=".6"/><rect x="1776.0" y="351.1" width="3.2" height="1.2" fill="#8a1640" opacity=".6"/><rect x="1781.0" y="351.1" width="4.2" height="1.2" fill="#8a1640" opacity=".6"/><rect x="1787.0" y="351.1" width="6.2" height="1.2" fill="#1f6dc1" opacity=".6"/><rect x="1795.0" y="351.1" width="2.2" height="1.2" fill="#8a1640" opacity=".6"/><rect x="1799.0" y="351.1" width="10.2" height="1.2" fill="#2f8f8f" opacity=".6"/><rect x="1811.0" y="351.1" width="12.2" height="1.2" fill="#8a1640" opacity=".6"/><rect x="1825.0" y="351.1" width="11.2" height="1.2" fill="#8a1640" opacity=".6"/><rect x="1838.0" y="351.1" width="9.2" height="1.2" fill="#ee6b3b" opacity=".6"/><rect x="1848.0" y="351.1" width="0.2" height="1.2" fill="#8a1640" opacity=".6"/><rect x="1761.0" y="354.9" width="10.2" height="1.2" fill="#8a1640" opacity=".6"/><rect x="1773.0" y="354.9" width="4.2" height="1.2" fill="#ee6b3b" opacity=".6"/><rect x="1778.0" y="354.9" width="2.2" height="1.2" fill="#8a1640" opacity=".6"/><rect x="1781.0" y="354.9" width="2.2" height="1.2" fill="#8a1640" opacity=".6"/><rect x="1785.0" y="354.9" width="12.2" height="1.2" fill="#ee6b3b" opacity=".6"/><rect x="1798.0" y="354.9" width="4.2" height="1.2" fill="#ee6b3b" opacity=".6"/><rect x="1761.0" y="356.8" width="11.2" height="1.2" fill="#2f8f8f" opacity=".6"/><rect x="1774.0" y="356.8" width="12.2" height="1.2" fill="#2f8f8f" opacity=".6"/><rect x="1788.0" y="356.8" width="9.2" height="1.2" fill="#ee6b3b" opacity=".6"/><rect x="1761.0" y="358.7" width="6.2" height="1.2" fill="#8a1640" opacity=".6"/><rect x="1769.0" y="358.7" width="12.2" height="1.2" fill="#8a1640" opacity=".6"/><rect x="1783.0" y="358.7" width="4.2" height="1.2" fill="#2f8f8f" opacity=".6"/><rect x="1761.0" y="362.6" width="2.2" height="1.2" fill="#1f6dc1" opacity=".6"/><rect x="1765.0" y="362.6" width="13.2" height="1.2" fill="#1f6dc1" opacity=".6"/><rect x="1779.0" y="362.6" width="13.2" height="1.2" fill="#2f8f8f" opacity=".6"/><rect x="1794.0" y="362.6" width="4.2" height="1.2" fill="#ee6b3b" opacity=".6"/><rect x="1799.0" y="362.6" width="6.2" height="1.2" fill="#ee6b3b" opacity=".6"/><rect x="1807.0" y="362.6" width="2.2" height="1.2" fill="#8a1640" opacity=".6"/><rect x="1811.0" y="362.6" width="13.2" height="1.2" fill="#2f8f8f" opacity=".6"/><rect x="1826.0" y="362.6" width="9.2" height="1.2" fill="#8a1640" opacity=".6"/><rect x="1765.0" y="364.5" width="12.2" height="1.2" fill="#8a1640" opacity=".6"/><rect x="1779.0" y="364.5" width="8.2" height="1.2" fill="#2f8f8f" opacity=".6"/><rect x="1789.0" y="364.5" width="6.2" height="1.2" fill="#2f8f8f" opacity=".6"/><rect x="1797.0" y="364.5" width="0.2" height="1.2" fill="#8a1640" opacity=".6"/><rect x="1765.0" y="366.4" width="2.2" height="1.2" fill="#ee6b3b" opacity=".6"/><rect x="1769.0" y="366.4" width="5.2" height="1.2" fill="#8a1640" opacity=".6"/><rect x="1776.0" y="366.4" width="5.2" height="1.2" fill="#ee6b3b" opacity=".6"/><rect x="1783.0" y="366.4" width="4.2" height="1.2" fill="#ee6b3b" opacity=".6"/><rect x="1769.0" y="368.3" width="7.2" height="1.2" fill="#8a1640" opacity=".6"/><rect x="1777.0" y="368.3" width="8.2" height="1.2" fill="#8a1640" opacity=".6"/><rect x="1787.0" y="368.3" width="13.2" height="1.2" fill="#2f8f8f" opacity=".6"/><rect x="1802.0" y="368.3" width="9.2" height="1.2" fill="#1f6dc1" opacity=".6"/><rect x="1813.0" y="368.3" width="13.2" height="1.2" fill="#8a1640" opacity=".6"/><rect x="1827.0" y="368.3" width="4.2" height="1.2" fill="#2f8f8f" opacity=".6"/><rect x="1769.0" y="370.2" width="11.2" height="1.2" fill="#2f8f8f" opacity=".6"/><rect x="1781.0" y="370.2" width="8.2" height="1.2" fill="#8a1640" opacity=".6"/><rect x="1791.0" y="370.2" width="3.2" height="1.2" fill="#8a1640" opacity=".6"/><rect x="1795.0" y="370.2" width="4.2" height="1.2" fill="#8a1640" opacity=".6"/><rect x="1769.0" y="372.1" width="3.2" height="1.2" fill="#8a1640" opacity=".6"/><rect x="1774.0" y="372.1" width="4.2" height="1.2" fill="#2f8f8f" opacity=".6"/><rect x="1779.0" y="372.1" width="13.2" height="1.2" fill="#8a1640" opacity=".6"/><rect x="1793.0" y="372.1" width="2.2" height="1.2" fill="#ee6b3b" opacity=".6"/><rect x="1797.0" y="372.1" width="12.2" height="1.2" fill="#2f8f8f" opacity=".6"/><rect x="1810.0" y="372.1" width="5.2" height="1.2" fill="#8a1640" opacity=".6"/><rect x="1773.0" y="374.1" width="2.2" height="1.2" fill="#8a1640" opacity=".6"/><rect x="1777.0" y="374.1" width="7.2" height="1.2" fill="#ee6b3b" opacity=".6"/><rect x="1786.0" y="374.1" width="12.2" height="1.2" fill="#8a1640" opacity=".6"/><rect x="1800.0" y="374.1" width="8.2" height="1.2" fill="#8a1640" opacity=".6"/><rect x="1809.0" y="374.1" width="5.2" height="1.2" fill="#ee6b3b" opacity=".6"/><rect x="1815.0" y="374.1" width="2.2" height="1.2" fill="#8a1640" opacity=".6"/><rect x="1819.0" y="374.1" width="3.2" height="1.2" fill="#8a1640" opacity=".6"/><rect x="1824.0" y="374.1" width="8.2" height="1.2" fill="#2f8f8f" opacity=".6"/><rect x="1773.0" y="376.0" width="3.2" height="1.2" fill="#ee6b3b" opacity=".6"/><rect x="1777.0" y="376.0" width="12.2" height="1.2" fill="#ee6b3b" opacity=".6"/><rect x="1791.0" y="376.0" width="7.2" height="1.2" fill="#2f8f8f" opacity=".6"/><rect x="1800.0" y="376.0" width="6.2" height="1.2" fill="#8a1640" opacity=".6"/><rect x="1808.0" y="376.0" width="6.2" height="1.2" fill="#2f8f8f" opacity=".6"/><rect x="1815.0" y="376.0" width="10.2" height="1.2" fill="#8a1640" opacity=".6"/><rect x="1773.0" y="377.9" width="7.2" height="1.2" fill="#8a1640" opacity=".6"/><rect x="1782.0" y="377.9" width="10.2" height="1.2" fill="#1f6dc1" opacity=".6"/><rect x="1794.0" y="377.9" width="11.2" height="1.2" fill="#2f8f8f" opacity=".6"/><rect x="1806.0" y="377.9" width="8.2" height="1.2" fill="#8a1640" opacity=".6"/><rect x="1816.0" y="377.9" width="10.2" height="1.2" fill="#8a1640" opacity=".6"/><rect x="1827.0" y="377.9" width="7.2" height="1.2" fill="#1f6dc1" opacity=".6"/><rect x="1836.0" y="377.9" width="0.2" height="1.2" fill="#8a1640" opacity=".6"/><rect x="1773.0" y="379.8" width="5.2" height="1.2" fill="#2f8f8f" opacity=".6"/><rect x="1779.0" y="379.8" width="11.2" height="1.2" fill="#8a1640" opacity=".6"/><rect x="1792.0" y="379.8" width="4.2" height="1.2" fill="#1f6dc1" opacity=".6"/><rect x="1797.0" y="379.8" width="10.2" height="1.2" fill="#ee6b3b" opacity=".6"/><rect x="1809.0" y="379.8" width="2.2" height="1.2" fill="#8a1640" opacity=".6"/><rect x="1813.0" y="379.8" width="9.2" height="1.2" fill="#8a1640" opacity=".6"/><rect x="1824.0" y="379.8" width="13.2" height="1.2" fill="#8a1640" opacity=".6"/><rect x="1838.0" y="379.8" width="9.2" height="1.2" fill="#8a1640" opacity=".6"/><rect x="1849.0" y="379.8" width="3.2" height="1.2" fill="#2f8f8f" opacity=".6"/><rect x="1773.0" y="381.7" width="4.2" height="1.2" fill="#2f8f8f" opacity=".6"/><rect x="1778.0" y="381.7" width="13.2" height="1.2" fill="#ee6b3b" opacity=".6"/><rect x="1793.0" y="381.7" width="4.2" height="1.2" fill="#8a1640" opacity=".6"/><rect x="1799.0" y="381.7" width="3.2" height="1.2" fill="#1f6dc1" opacity=".6"/><rect x="1804.0" y="381.7" width="10.2" height="1.2" fill="#8a1640" opacity=".6"/><rect x="1815.0" y="381.7" width="12.2" height="1.2" fill="#2f8f8f" opacity=".6"/><rect x="1829.0" y="381.7" width="3.2" height="1.2" fill="#1f6dc1" opacity=".6"/><rect x="1834.0" y="381.7" width="13.2" height="1.2" fill="#8a1640" opacity=".6"/><rect x="1849.0" y="381.7" width="3.2" height="1.2" fill="#8a1640" opacity=".6"/><rect x="1773.0" y="383.6" width="5.2" height="1.2" fill="#2f8f8f" opacity=".6"/><rect x="1780.0" y="383.6" width="8.2" height="1.2" fill="#8a1640" opacity=".6"/><rect x="1790.0" y="383.6" width="4.2" height="1.2" fill="#1f6dc1" opacity=".6"/><rect x="1796.0" y="383.6" width="5.2" height="1.2" fill="#1f6dc1" opacity=".6"/><rect x="1802.0" y="383.6" width="10.2" height="1.2" fill="#8a1640" opacity=".6"/><rect x="1814.0" y="383.6" width="11.2" height="1.2" fill="#2f8f8f" opacity=".6"/><rect x="1826.0" y="383.6" width="7.2" height="1.2" fill="#8a1640" opacity=".6"/><rect x="1835.0" y="383.6" width="10.2" height="1.2" fill="#ee6b3b" opacity=".6"/><rect x="1847.0" y="383.6" width="5.2" height="1.2" fill="#8a1640" opacity=".6"/><rect x="1773.0" y="385.6" width="7.2" height="1.2" fill="#ee6b3b" opacity=".6"/><rect x="1782.0" y="385.6" width="9.2" height="1.2" fill="#2f8f8f" opacity=".6"/><rect x="1793.0" y="385.6" width="11.2" height="1.2" fill="#ee6b3b" opacity=".6"/><rect x="1805.0" y="385.6" width="7.2" height="1.2" fill="#1f6dc1" opacity=".6"/><rect x="1814.0" y="385.6" width="1.2" height="1.2" fill="#ee6b3b" opacity=".6"/><rect x="1773.0" y="387.5" width="5.2" height="1.2" fill="#2f8f8f" opacity=".6"/><rect x="1780.0" y="387.5" width="13.2" height="1.2" fill="#8a1640" opacity=".6"/><rect x="1769.0" y="389.4" width="4.2" height="1.2" fill="#2f8f8f" opacity=".6"/><rect x="1774.0" y="389.4" width="5.2" height="1.2" fill="#2f8f8f" opacity=".6"/><rect x="1781.0" y="389.4" width="11.2" height="1.2" fill="#8a1640" opacity=".6"/><rect x="1794.0" y="389.4" width="4.2" height="1.2" fill="#ee6b3b" opacity=".6"/><rect x="1800.0" y="389.4" width="5.2" height="1.2" fill="#2f8f8f" opacity=".6"/><rect x="1807.0" y="389.4" width="3.2" height="1.2" fill="#ee6b3b" opacity=".6"/><rect x="1812.0" y="389.4" width="3.2" height="1.2" fill="#ee6b3b" opacity=".6"/><rect x="1817.0" y="389.4" width="4.2" height="1.2" fill="#ee6b3b" opacity=".6"/><rect x="1823.0" y="389.4" width="13.2" height="1.2" fill="#2f8f8f" opacity=".6"/><rect x="1838.0" y="389.4" width="6.2" height="1.2" fill="#ee6b3b" opacity=".6"/><rect x="1845.0" y="389.4" width="7.2" height="1.2" fill="#8a1640" opacity=".6"/><rect x="1765.0" y="391.3" width="5.2" height="1.2" fill="#1f6dc1" opacity=".6"/><rect x="1772.0" y="391.3" width="2.2" height="1.2" fill="#8a1640" opacity=".6"/><rect x="1776.0" y="391.3" width="8.2" height="1.2" fill="#2f8f8f" opacity=".6"/><rect x="1785.0" y="391.3" width="10.2" height="1.2" fill="#2f8f8f" opacity=".6"/><rect x="1797.0" y="391.3" width="9.2" height="1.2" fill="#8a1640" opacity=".6"/><rect x="1807.0" y="391.3" width="6.2" height="1.2" fill="#8a1640" opacity=".6"/><rect x="1815.0" y="391.3" width="8.2" height="1.2" fill="#8a1640" opacity=".6"/><rect x="1825.0" y="391.3" width="5.2" height="1.2" fill="#8a1640" opacity=".6"/><rect x="1832.0" y="391.3" width="13.2" height="1.2" fill="#8a1640" opacity=".6"/><rect x="1847.0" y="391.3" width="4.2" height="1.2" fill="#2f8f8f" opacity=".6"/></svg>
<div class="abs" style="left:1747px;top:89px;width:6px;height:1103.5px;background:linear-gradient(90deg,rgba(0,0,0,0),rgba(0,0,0,.07))"></div>
<div class="abs" style="left:1853px;top:89px;width:1px;height:1103.5px;background:#d8d8d8"></div>
<div class="abs" style="left:1854px;top:943.6px;width:16px;height:2px;background:#29b5e8"></div>
<div class="abs" style="left:345px;top:592px;width:1500px;height:251.5px;background:#fff;overflow:hidden;filter:blur(.5px)"><div class="abs" style="left:33px;top:0;width:1.6px;height:185.8px;background:#d0d0d0"></div><div class="code" style="opacity:.88;left:33px;top:-2.45px;font-size:27.4562px;line-height:37.5px;height:37.5px">    <span class="v">instruction </span><span class="o">=</span> <span class="s">"Given the following prompt and transcript, answer the question using only the transcript</span></div><div class="code" style="opacity:.88;left:33px;top:35.05px;font-size:27.4562px;line-height:37.5px;height:37.5px">    <span class="v">prompt </span><span class="o">=</span> <span class="fp">f</span><span class="s">"Instruction: </span><span class="b1">{</span><span class="v">instruction</span><span class="b1">}</span><span class="s">, Prompt: </span><span class="b1">{</span><span class="v">user_message</span><span class="b1">}</span><span class="s">, Transcript chunk is: </span><span class="b1">{</span><span class="v">transcription</span><span class="b1">}</span><span class="s">"</span></div><div class="code" style="opacity:.88;left:33px;top:72.55px;font-size:27.4562px;line-height:37.5px;height:37.5px">    <span class="v">prompt </span><span class="o">=</span><span class="v"> prompt.</span><span class="f">replace</span><span class="b1">(</span><span class="s">"'"</span><span class="p">, </span><span class="s">""</span><span class="b1">)</span></div><div class="code" style="opacity:.88;left:33px;top:110.05px;font-size:27.4562px;line-height:37.5px;height:37.5px">    <span class="v">response </span><span class="o">=</span><span class="v"> session.</span><span class="f">sql</span><span class="b1">(</span><span class="v">f</span><span class="s">'''select </span><span class="s hl">SNOWFLAKE.CORTEX.COMPLETE</span><span class="b1">(</span><span class="s">'</span><span class="b2">{</span><span class="v">model</span><span class="b2">}</span><span class="s">', '</span><span class="b2">{</span><span class="v">prompt</span><span class="b2">}</span><span class="s">'</span><span class="b1">)</span><span class="s"> as SUMMARY''')</span></div><div class="code" style="opacity:.88;left:33px;top:147.55px;font-size:27.4562px;line-height:37.5px;height:37.5px">    <span class="v">status.</span><span class="f">update</span><span class="b1">(</span><span class="a">label</span><span class="o">=</span><span class="s">"Complete!"</span><span class="p">, </span><span class="a">state</span><span class="o">=</span><span class="s">"complete"</span><span class="p">, </span><span class="a">expanded</span><span class="o">=</span><span class="c">False</span><span class="b1">)</span></div><div class="code" style="opacity:.88;left:33px;top:185.05px;font-size:27.4562px;line-height:37.5px;height:37.5px"><span class="v">st.</span><span class="f">markdown</span><span class="b1">(</span><span class="v">response</span><span class="b2">[</span><span class="s">'SUMMARY'</span><span class="b2">]</span><span class="b2">[</span><span class="n">0</span><span class="b2">]</span><span class="b1">)</span></div><div class="code" style="opacity:.88;left:33px;top:222.55px;font-size:27.4562px;line-height:37.5px;height:37.5px"><span class="v">st.session_state.messages.</span><span class="f">append</span><span class="b1">(</span><span class="b2">{</span><span class="s">"role"</span><span class="p">: </span><span class="s">"assistant"</span><span class="p">, </span><span class="s">"content"</span><span class="p">: </span><span class="v">response</span><span class="b3">[</span><span class="s">'SUMMARY'</span><span class="b3">]</span><span class="b3">[</span><span class="n">0</span><span class="b3">]</span><span class="b2">}</span><span class="b1">)</span></div></div><div class="abs" style="left:1837px;top:592px;width:8px;height:251.5px;background:linear-gradient(90deg,rgba(0,0,0,0),rgba(0,0,0,.07))"></div>
<div class="abs" style="left:2px;top:1192px;width:71px;height:1px;background:#ece6e3"></div><div class="abs" id="status"></div>
<svg style="left:0;top:0" width="1870" height="1224" viewBox="0 0 1870 1224"><path d="M30.2 1200.4 L19.8 1206 V1212.4 L25.7 1215.7 L31.5 1212.4 V1207 L24.6 1210.6" fill="none" stroke="#fff" stroke-width="3.1" stroke-linejoin="round" stroke-linecap="round"/><circle cx="127.2" cy="1201.8" r="2.8" fill="none" stroke="#fff" stroke-width="1.5" stroke-linecap="round" stroke-linejoin="round"/><circle cx="127.2" cy="1214.8" r="2.8" fill="none" stroke="#fff" stroke-width="1.5" stroke-linecap="round" stroke-linejoin="round"/><circle cx="135.4" cy="1204.6" r="2.6" fill="none" stroke="#fff" stroke-width="1.5" stroke-linecap="round" stroke-linejoin="round"/><path d="M127.2 1204.6 V1212 M135.4 1207.2 C135.4 1211 130 1210 127.4 1212" fill="none" stroke="#fff" stroke-width="1.5" stroke-linecap="round" stroke-linejoin="round"/><path d="M201.8 1207.2 A7.6 7.6 0 0 1 216.2 1205.4 M213 1206.4 L216.8 1208.2 L218.6 1204.4 M216.6 1210 A7.6 7.6 0 0 1 202.2 1211.8 M205.4 1210.8 L201.6 1209 L199.8 1212.8" fill="none" stroke="#fff" stroke-width="1.5" stroke-linecap="round" stroke-linejoin="round"/><circle cx="250.7" cy="1208.2" r="8.6" fill="none" stroke="#fff" stroke-width="1.5" stroke-linecap="round" stroke-linejoin="round"/><path d="M246.9 1204.4 l7.6 7.6 M254.5 1204.4 l-7.6 7.6" fill="none" stroke="#fff" stroke-width="1.5" stroke-linecap="round" stroke-linejoin="round"/><path d="M292.3 1199.8 L300.6 1216 H284 Z" fill="none" stroke="#fff" stroke-width="1.5" stroke-linecap="round" stroke-linejoin="round"/><path d="M292.3 1205.4 V1210.6 M292.3 1212.8 V1213.6" fill="none" stroke="#fff" stroke-width="1.5" stroke-linecap="round" stroke-linejoin="round"/><path d="M361.4 1199.4 L363.8 1205.8 L370.5 1206.0 L365.2 1210.2 L367.0 1216.8 L361.4 1213.0 L355.8 1216.8 L357.6 1210.2 L352.3 1206.0 L359.0 1205.8 Z" fill="#fff"/><ellipse cx="539" cy="1202.4" rx="6.6" ry="2.6" fill="none" stroke="#fff" stroke-width="1.5" stroke-linecap="round" stroke-linejoin="round"/><path d="M532.4 1202.4 V1214 a6.6 2.6 0 0 0 13.2 0 V1202.4" fill="none" stroke="#fff" stroke-width="1.5" stroke-linecap="round" stroke-linejoin="round"/><path d="M650.6 1197.4 L651.5 1199.7 L653.8 1200.6 L651.5 1201.5 L650.6 1203.8 L649.7 1201.5 L647.4 1200.6 L649.7 1199.7 Z" fill="#fff"/><path d="M668 1200 L652.6 1216.8 M656.6 1201 C653.6 1203.6 653.2 1207 654.8 1209.8 M656.6 1201 L656.2 1204.8 M656.6 1201 L659 1205.2 M668.2 1204.8 C669.6 1208.8 666 1212.6 661.2 1214.4 M661.2 1214.4 l0.6 -2.8 M661.2 1214.4 l2.8 0.8" fill="none" stroke="#fff" stroke-width="1.5" stroke-linecap="round" stroke-linejoin="round"/><path d="M705.9 1199.4 L713 1204.9 L705.9 1210.4 V1207.6 C700.5 1207.4 697 1209 694.6 1211.8 C695.4 1206.4 699.5 1203 705.9 1202.6 Z" fill="none" stroke="#fff" stroke-width="1.5" stroke-linecap="round" stroke-linejoin="round"/><circle cx="702.2" cy="1214.6" r="2.6" fill="none" stroke="#fff" stroke-width="1.5" stroke-linecap="round" stroke-linejoin="round"/><path d="M1142.6 1202.6 l10.8 10.8 M1153.4 1202.6 l-10.8 10.8" fill="none" stroke="#b3262f" stroke-width="1.5"/><circle cx="1683" cy="1208.2" r="8.4" fill="none" stroke="#fff" stroke-width="1.5" stroke-linecap="round" stroke-linejoin="round"/><path d="M1677.2 1214.2 L1688.8 1202.2" fill="none" stroke="#fff" stroke-width="1.5" stroke-linecap="round" stroke-linejoin="round"/><path d="M1792.4 1203.6 L1793.2 1199.2 H1798.4 L1799.2 1203.6 Z M1792.4 1212.8 L1793.2 1217.2 H1798.4 L1799.2 1212.8 Z" fill="#3c8f3c"/><circle cx="1795.8" cy="1208.2" r="5.8" fill="#29b5e8" stroke="#3c8f3c" stroke-width="1.7"/><path d="M1795.8 1205.4 V1208.6 H1798" fill="none" stroke="#3c8f3c" stroke-width="1.6" stroke-linecap="round" stroke-linejoin="round"/><path d="M1833.4 1214 C1835.4 1212 1835 1210 1835 1207 a5.9 5.9 0 0 1 11.8 0 C1846.8 1210 1846.4 1212 1848.4 1214 Z M1839 1216.6 a2 2 0 0 0 3.8 0" fill="none" stroke="#fff" stroke-width="1.5" stroke-linecap="round" stroke-linejoin="round"/></svg>
<span class="t" style="left:39.33px;top:1198.94px;font-size:18.5px;color:#fff;transform:scaleX(1.0786);">Gitpod</span>
<span class="t" style="left:145.82px;top:1198.94px;font-size:18.5px;color:#fff;transform:scaleX(1.1076);">main</span>
<span class="t" style="left:265.60px;top:1198.94px;font-size:18.5px;color:#fff;transform:scaleX(1.0000);">0</span>
<span class="t" style="left:306.58px;top:1198.94px;font-size:18.5px;color:#fff;transform:scaleX(1.0216);">12</span>
<span class="t" style="left:376.50px;top:1198.94px;font-size:18.5px;color:#fff;transform:scaleX(1.0404);">Open Streamlit</span>
<span class="t" style="left:553.38px;top:1198.94px;font-size:18.5px;color:#fff;transform:scaleX(1.0247);">Connect</span>
<span class="t" style="left:718.07px;top:1198.94px;font-size:18.5px;color:#fff;transform:scaleX(0.9973);">Share</span>
<span class="t" style="left:792.31px;top:1198.94px;font-size:18.5px;color:#fff;transform:scaleX(1.0698);">Python</span>
<span class="t" style="left:876.59px;top:1198.94px;font-size:18.5px;color:#fff;transform:scaleX(1.0119);">3.8.18 64-bit ('shims': pyenv)</span>
<span class="t" style="left:1162.53px;top:1198.94px;font-size:18.5px;color:#b3262f;transform:scaleX(1.0484);">Environment Not Configured</span>
<span class="t" style="left:1430.33px;top:1198.94px;font-size:18.5px;color:#fff;transform:scaleX(1.0374);">Layout: de</span>
<span class="t" style="left:1542.27px;top:1198.94px;font-size:18.5px;color:#fff;transform:scaleX(1.0183);">Ports: 46319</span>
<span class="t" style="left:1697.81px;top:1198.94px;font-size:18.5px;color:#fff;transform:scaleX(1.0631);">Prettier</span>
<div class="abs" id="top"></div><div class="abs" id="lb"></div>
</body></html>
